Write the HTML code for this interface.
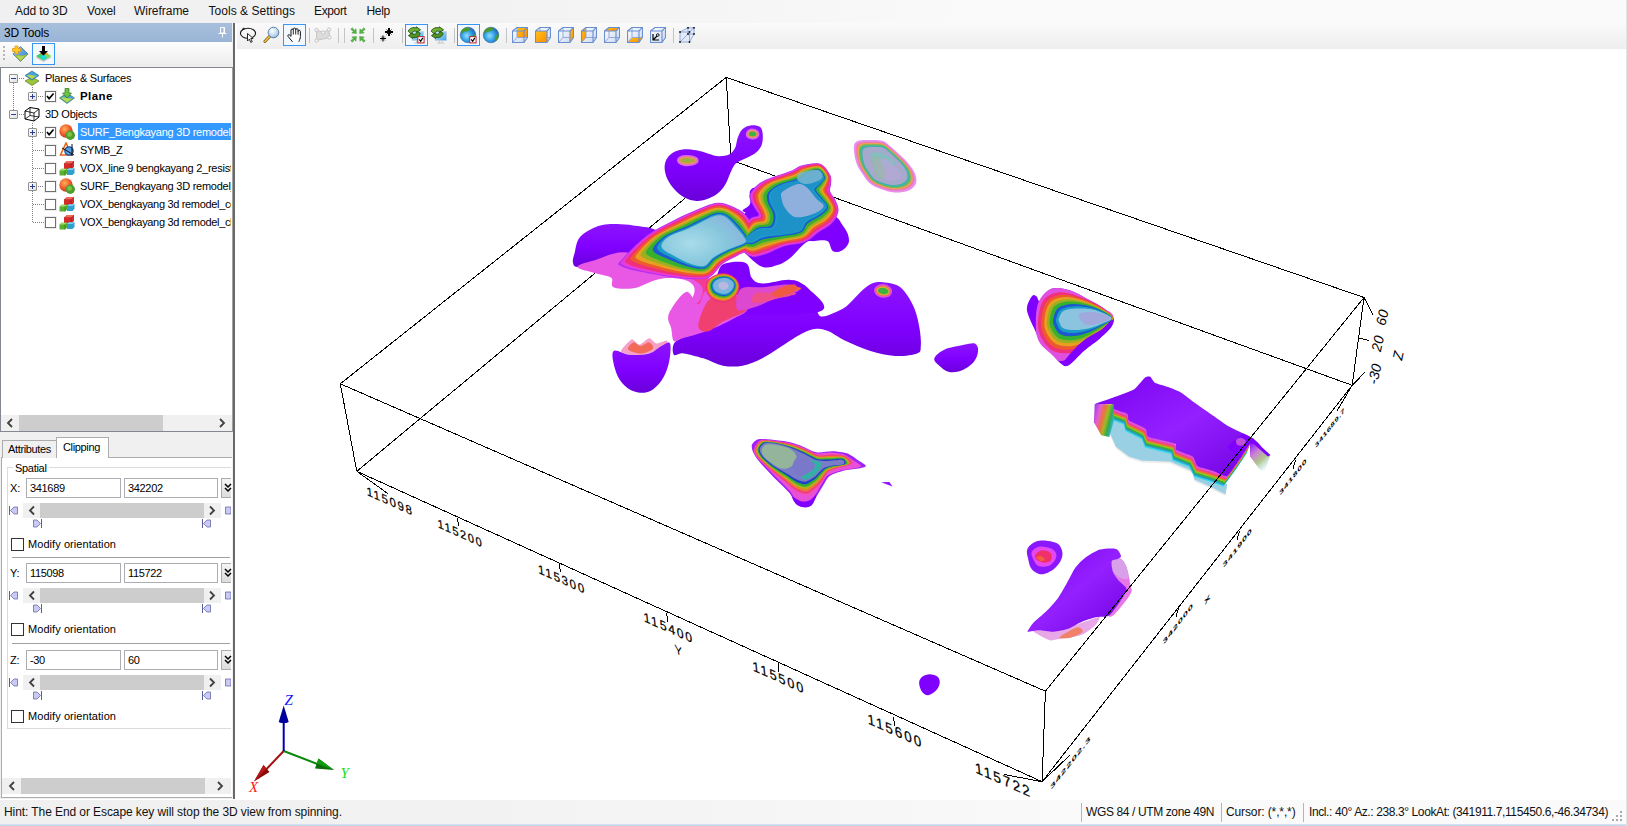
<!DOCTYPE html>
<html><head><meta charset="utf-8"><title>3D Viewer</title>
<style>
*{box-sizing:border-box;margin:0;padding:0}
html,body{width:1627px;height:826px;overflow:hidden;background:#fff;font-family:"Liberation Sans",sans-serif;font-size:12px;color:#000}
.a{position:absolute;white-space:nowrap}
#menubar{left:0;top:0;width:1627px;height:23px;background:linear-gradient(90deg,#f0f0f0 0,#f2f2f2 500px,#fafafa 1000px)}
#menubar span{position:absolute;top:3px;font-size:12px;line-height:16px;color:#111}
#lp{left:0;top:23px;width:235px;height:776px;background:#f0f0f0}
#lphead{left:0;top:23px;width:232px;height:19px;background:linear-gradient(#a7bfdc,#9ab5d6)}
#lptb{left:0;top:42px;width:232px;height:25px;background:linear-gradient(#fdfdfd,#ececec)}
#tree{left:0;top:67px;width:233px;height:365px;background:#fff;border:1px solid #828790;border-right-color:#a0a0a0}
#vsplit{left:233px;top:23px;width:2px;height:776px;background:#696969}
#tb{left:237px;top:23px;width:1390px;height:27.5px;background:linear-gradient(#fafafa,#ededed)}
#view{left:236px;top:49px;width:1391px;height:750px;background:#fff}
#status{left:0;top:799.5px;width:1627px;height:24.5px;background:linear-gradient(90deg,#f0f0f0 0,#f2f2f2 500px,#fafafa 1100px)}
#botline{left:0;top:824px;width:1627px;height:2px;background:linear-gradient(#dfe7f1,#bccfe6)}
#redge{left:1625.5px;top:0;width:1.5px;height:826px;background:#e3e3e3}
.trow{position:absolute;left:0;height:18px;line-height:18px;font-size:12px;white-space:nowrap}
.st{position:absolute;top:4px;font-size:12px;line-height:16px;color:#111}

.t11{font-size:11px;letter-spacing:-0.25px}
.xb{position:absolute;width:9px;height:9px;border:1px solid #919191;background:linear-gradient(135deg,#fff,#e0e0e0);border-radius:1px}
.xb i{position:absolute;left:1px;top:3px;width:5px;height:1px;background:#2b3f8f}
.xb b{position:absolute;left:3px;top:1px;width:1px;height:5px;background:#2b3f8f}
.cb{position:absolute;width:11px;height:11px;border:1px solid #707070;background:#fff;box-shadow:0 0 0 1px #ececec}
.dh{position:absolute;height:1px;background-image:linear-gradient(90deg,#808080 1px,transparent 1px);background-size:2px 1px}
.dv{position:absolute;width:1px;background-image:linear-gradient(#808080 1px,transparent 1px);background-size:1px 2px}
.tx{position:absolute;font-size:11px;letter-spacing:-0.25px;line-height:18px;height:18px;white-space:pre}
.ic{position:absolute;width:16px;height:16px}
.sb{position:absolute;background:#f0f0f0}
.sb .th{position:absolute;top:0;bottom:0;background:#cdcdcd}
.sb svg{position:absolute;top:0}
.inp{position:absolute;height:20px;border:1px solid #abadb3;background:#fff;font-size:11px;letter-spacing:-0.33px;line-height:18px;padding-left:3px}
.sep{position:absolute;left:12px;width:218px;height:2px;border-top:1px solid #a0a0a0;border-bottom:1px solid #fff}
</style></head><body>
<div id="menubar" class="a">
<span style="left:15px;letter-spacing:-0.1px">Add to 3D</span><span style="left:87px;letter-spacing:-0.17px">Voxel</span><span style="left:134px;letter-spacing:-0.04px">Wireframe</span><span style="left:208.5px;letter-spacing:0.03px">Tools &amp; Settings</span><span style="left:314px;letter-spacing:-0.36px">Export</span><span style="left:366.5px;letter-spacing:-0.3px">Help</span>
</div>
<div id="lp" class="a"></div>
<div id="lphead" class="a"><span class="a" style="left:4px;top:2px;font-size:12px;letter-spacing:-0.19px;line-height:16px">3D Tools</span></div>
<div id="lptb" class="a"></div>
<div id="tree" class="a"></div>
<div id="treecontent"><div class="dv" style="left:13px;top:83px;height:27px"></div>
<div class="dh" style="left:19px;top:78px;width:5px"></div>
<div class="dh" style="left:19px;top:114px;width:5px"></div>
<div class="dv" style="left:32px;top:87px;height:5px"></div>
<div class="dh" style="left:38px;top:96px;width:6px"></div>
<div class="dv" style="left:32px;top:123px;height:100px"></div>
<div class="dh" style="left:38px;top:132px;width:6px"></div>
<div class="dh" style="left:38px;top:186px;width:6px"></div>
<div class="dh" style="left:33px;top:150px;width:11px"></div>
<div class="dh" style="left:33px;top:168px;width:11px"></div>
<div class="dh" style="left:33px;top:204px;width:11px"></div>
<div class="dh" style="left:33px;top:222px;width:11px"></div>
<div class="xb" style="left:9px;top:74px"><i></i></div>
<div class="xb" style="left:9px;top:110px"><i></i></div>
<div class="xb" style="left:28px;top:92px"><i></i><b></b></div>
<div class="xb" style="left:28px;top:128px"><i></i><b></b></div>
<div class="xb" style="left:28px;top:182px"><i></i><b></b></div>
<div class="cb" style="left:45px;top:91px"><svg width="9" height="9" viewBox="1 1 9.5 9.5" style="position:absolute;left:0;top:0"><path d="M2 5.2 L4.3 8 L9 2.6" fill="none" stroke="#000" stroke-width="1.7"/></svg></div>
<div class="cb" style="left:45px;top:127px"><svg width="9" height="9" viewBox="1 1 9.5 9.5" style="position:absolute;left:0;top:0"><path d="M2 5.2 L4.3 8 L9 2.6" fill="none" stroke="#000" stroke-width="1.7"/></svg></div>
<div class="cb" style="left:45px;top:145px"></div>
<div class="cb" style="left:45px;top:163px"></div>
<div class="cb" style="left:45px;top:181px"></div>
<div class="cb" style="left:45px;top:199px"></div>
<div class="cb" style="left:45px;top:217px"></div>
<div class="a" style="left:78px;top:123px;width:153px;height:17px;background:#3399ff"></div>
<div class="tx" style="left:45px;top:69px;">Planes &amp; Surfaces</div>
<div class="tx" style="left:80px;top:87px;font-weight:bold;letter-spacing:0.4px;font-size:11.5px">Plane</div>
<div class="tx" style="left:45px;top:105px;">3D Objects</div>
<div class="tx" style="left:80px;top:123px;width:151px;overflow:hidden;color:#fff">SURF_Bengkayang 3D remodel_resistivity</div>
<div class="tx" style="left:80px;top:141px;">SYMB_Z</div>
<div class="tx" style="left:80px;top:159px;width:151px;overflow:hidden;">VOX_line 9 bengkayang 2_resistivity</div>
<div class="tx" style="left:80px;top:177px;width:151px;overflow:hidden;">SURF_Bengkayang 3D remodel_conductivity</div>
<div class="tx" style="left:80px;top:195px;width:151px;overflow:hidden;letter-spacing:-0.33px">VOX_bengkayang 3d remodel_conductivity</div>
<div class="tx" style="left:80px;top:213px;width:151px;overflow:hidden;letter-spacing:-0.33px">VOX_bengkayang 3d remodel_chargeability</div>
<svg class="ic" style="left:24px;top:70px" viewBox="0 0 16 16"><path d="M8 7 L15 11 L8 15.5 L1 11Z" fill="#9cc43c" stroke="#4d6b1a" stroke-width=".6"/><path d="M8 1 L15 5.5 L8 10 L1 5.5Z" fill="#4aa3d8" stroke="#1d5f8a" stroke-width=".6"/><path d="M3 5.5 C6 3.5 9 7 13 5.2 L8 9 Z" fill="#b8d94a"/></svg>
<svg class="ic" style="left:59px;top:88px" viewBox="0 0 16 16"><path d="M8 5 L15.5 10 L8 15.5 L.5 10Z" fill="#4aa3d8" stroke="#2a6b2a" stroke-width=".6"/><path d="M2 10 C5 7.5 9 12 14 10 L8 14.5Z" fill="#b8d94a"/><path d="M6 .5 H10 V5 H12.5 L8 10 L3.5 5 H6Z" fill="#6fc043" stroke="#2f7a1d" stroke-width=".7"/></svg>
<svg class="ic" style="left:24px;top:106px" viewBox="0 0 16 16"><path d="M1 5 L6 1.5 L15 3 L15 11 L10 15 L1 13Z" fill="#fff" stroke="#000" stroke-width="1"/><path d="M1 5 L10 7 L15 3 M10 7 L10 15 M6 1.5 L6 9.5 L1 13 M6 9.5 L15 11" fill="none" stroke="#000" stroke-width=".8"/></svg>
<svg class="ic" style="left:59px;top:124px" viewBox="0 0 16 16"><defs><radialGradient id="sg132" cx=".4" cy=".35" r=".7"><stop offset="0" stop-color="#ffb05a"/><stop offset=".6" stop-color="#f0562a"/><stop offset="1" stop-color="#c9301a"/></radialGradient></defs><circle cx="7" cy="7" r="6.7" fill="url(#sg132)"/><circle cx="11.3" cy="11.3" r="4.7" fill="#4f9e2c"/><circle cx="10.6" cy="10.4" r="2.4" fill="#8fd05a" opacity=".7"/></svg>
<svg class="ic" style="left:59px;top:142px" viewBox="0 0 16 16"><path d="M7 1 L1.5 13 H12.5Z" fill="none" stroke="#e8641a" stroke-width="1.6"/><circle cx="10" cy="9" r="4.2" fill="#5aa0e0" stroke="#1d4f9a" stroke-width="1.2"/><path d="M13 2 L13 14 M3 6 L15 13" stroke="#111" stroke-width="1"/></svg>
<svg class="ic" style="left:59px;top:160px" viewBox="0 0 16 16"><path d="M5 3.5 L8 1 L15 1 L15 7 L12 9.5 L5 9.5Z" fill="#d42a2a"/><path d="M5 3.5 L12 3.5 L15 1 M12 3.5 L12 9.5" stroke="#8a1010" stroke-width=".6" fill="none"/><path d="M5 3.5 L8 1 L15 1 L12 3.5Z" fill="#f06a5a"/><path d="M8 10 L10 8.2 L15.5 8.2 L15.5 13 L13.5 15 L8 15Z" fill="#2f9fd0"/><path d="M8 10 L10 8.2 L15.5 8.2 L13.5 10Z" fill="#7fd0f0"/><path d="M.5 10.5 L2.5 8.7 L8 8.7 L8 13.5 L6 15.5 L.5 15.5Z" fill="#58b030"/><path d="M.5 10.5 L2.5 8.7 L8 8.7 L6 10.5Z" fill="#a0e070"/><path d="M6 10.5 L6 15.5" stroke="#2d7010" stroke-width=".6"/></svg>
<svg class="ic" style="left:59px;top:178px" viewBox="0 0 16 16"><defs><radialGradient id="sg186" cx=".4" cy=".35" r=".7"><stop offset="0" stop-color="#ffb05a"/><stop offset=".6" stop-color="#f0562a"/><stop offset="1" stop-color="#c9301a"/></radialGradient></defs><circle cx="7" cy="7" r="6.7" fill="url(#sg186)"/><circle cx="11.3" cy="11.3" r="4.7" fill="#4f9e2c"/><circle cx="10.6" cy="10.4" r="2.4" fill="#8fd05a" opacity=".7"/></svg>
<svg class="ic" style="left:59px;top:196px" viewBox="0 0 16 16"><path d="M5 3.5 L8 1 L15 1 L15 7 L12 9.5 L5 9.5Z" fill="#d42a2a"/><path d="M5 3.5 L12 3.5 L15 1 M12 3.5 L12 9.5" stroke="#8a1010" stroke-width=".6" fill="none"/><path d="M5 3.5 L8 1 L15 1 L12 3.5Z" fill="#f06a5a"/><path d="M8 10 L10 8.2 L15.5 8.2 L15.5 13 L13.5 15 L8 15Z" fill="#2f9fd0"/><path d="M8 10 L10 8.2 L15.5 8.2 L13.5 10Z" fill="#7fd0f0"/><path d="M.5 10.5 L2.5 8.7 L8 8.7 L8 13.5 L6 15.5 L.5 15.5Z" fill="#58b030"/><path d="M.5 10.5 L2.5 8.7 L8 8.7 L6 10.5Z" fill="#a0e070"/><path d="M6 10.5 L6 15.5" stroke="#2d7010" stroke-width=".6"/></svg>
<svg class="ic" style="left:59px;top:214px" viewBox="0 0 16 16"><path d="M5 3.5 L8 1 L15 1 L15 7 L12 9.5 L5 9.5Z" fill="#d42a2a"/><path d="M5 3.5 L12 3.5 L15 1 M12 3.5 L12 9.5" stroke="#8a1010" stroke-width=".6" fill="none"/><path d="M5 3.5 L8 1 L15 1 L12 3.5Z" fill="#f06a5a"/><path d="M8 10 L10 8.2 L15.5 8.2 L15.5 13 L13.5 15 L8 15Z" fill="#2f9fd0"/><path d="M8 10 L10 8.2 L15.5 8.2 L13.5 10Z" fill="#7fd0f0"/><path d="M.5 10.5 L2.5 8.7 L8 8.7 L8 13.5 L6 15.5 L.5 15.5Z" fill="#58b030"/><path d="M.5 10.5 L2.5 8.7 L8 8.7 L6 10.5Z" fill="#a0e070"/><path d="M6 10.5 L6 15.5" stroke="#2d7010" stroke-width=".6"/></svg>
<div class="sb" style="left:1px;top:415px;width:231px;height:16px"><div class="th" style="left:18px;width:144px"></div><svg width="231" height="16"><path d="M11 4 L7 8 L11 12" fill="none" stroke="#404040" stroke-width="1.8"/><path d="M219 4 L223 8 L219 12" fill="none" stroke="#404040" stroke-width="1.8"/></svg></div></div>
<div id="clip"><div class="a" style="left:1px;top:457px;width:231px;height:341px;border:1px solid #acacac;border-right:none;background:#fff"></div>
<div class="a" style="left:2px;top:440px;width:55px;height:18px;border:1px solid #acacac;border-bottom:none;background:#f0f0f0"></div>
<div class="a" style="left:56px;top:437px;width:53px;height:21px;border:1px solid #acacac;border-bottom:none;background:#fff"></div>
<div class="tx" style="left:8px;top:440px;letter-spacing:-0.35px">Attributes</div>
<div class="tx" style="left:63px;top:438px;letter-spacing:-0.35px">Clipping</div>
<div class="a" style="left:7px;top:467px;width:224px;height:262px;border:1px solid #dcdcdc;border-right:none"></div>
<div class="tx" style="left:13px;top:459px;background:#fff;padding:0 2px;letter-spacing:-0.3px">Spatial</div>
<div class="tx" style="left:10px;top:479px;letter-spacing:-0.2px">X:</div>
<div class="inp" style="left:26px;top:478px;width:95px">341689</div>
<div class="inp" style="left:124px;top:478px;width:94px">342202</div>
<div class="a" style="left:221px;top:478px;width:10px;height:20px;border:1px solid #acacac;border-right:none;background:linear-gradient(#f4f4f4,#dcdcdc)"><svg width="9" height="18" style="position:absolute;left:2px;top:0"><path d="M1 5 L4 8 L7 5 M1 9 L4 12 L7 9" fill="none" stroke="#000" stroke-width="1.5"/></svg></div>
<div class="sb" style="left:23px;top:503px;width:198px;height:15px"><div class="th" style="left:17px;width:164px"></div><svg width="198" height="15"><path d="M11 3.5 L7 7.5 L11 11.5" fill="none" stroke="#404040" stroke-width="1.8"/><path d="M187 3.5 L191 7.5 L187 11.5" fill="none" stroke="#404040" stroke-width="1.8"/></svg></div>
<svg class="a" style="left:9px;top:506px" width="10" height="10"><path d="M.5 0 V9" stroke="#5b5b9a" fill="none"/><path d="M1.5 4.5 L5 1 H8.5 V8 H5Z" fill="#c9c9f5" stroke="#6a6aa8" stroke-width=".8"/></svg>
<svg class="a" style="left:225px;top:506px" width="6" height="10"><path d="M.5 1 H6 V8 H.5Z" fill="#c9c9f5" stroke="#6a6aa8" stroke-width=".8"/></svg>
<svg class="a" style="left:33px;top:519px" width="10" height="10"><path d="M8.5 0 V9" stroke="#5b5b9a" fill="none"/><path d="M7.5 4.5 L4 1 H.5 V8 H4Z" fill="#c9c9f5" stroke="#6a6aa8" stroke-width=".8"/></svg>
<svg class="a" style="left:202px;top:519px" width="10" height="10"><path d="M.5 0 V9" stroke="#5b5b9a" fill="none"/><path d="M1.5 4.5 L5 1 H8.5 V8 H5Z" fill="#c9c9f5" stroke="#6a6aa8" stroke-width=".8"/></svg>
<div class="cb" style="left:11px;top:538px;width:13px;height:13px;border-color:#333;box-shadow:none"></div>
<div class="tx" style="left:28px;top:535px;letter-spacing:0.065px">Modify orientation</div>
<div class="sep" style="top:557px"></div>
<div class="tx" style="left:10px;top:564px;letter-spacing:-0.2px">Y:</div>
<div class="inp" style="left:26px;top:563px;width:95px">115098</div>
<div class="inp" style="left:124px;top:563px;width:94px">115722</div>
<div class="a" style="left:221px;top:563px;width:10px;height:20px;border:1px solid #acacac;border-right:none;background:linear-gradient(#f4f4f4,#dcdcdc)"><svg width="9" height="18" style="position:absolute;left:2px;top:0"><path d="M1 5 L4 8 L7 5 M1 9 L4 12 L7 9" fill="none" stroke="#000" stroke-width="1.5"/></svg></div>
<div class="sb" style="left:23px;top:588px;width:198px;height:15px"><div class="th" style="left:17px;width:164px"></div><svg width="198" height="15"><path d="M11 3.5 L7 7.5 L11 11.5" fill="none" stroke="#404040" stroke-width="1.8"/><path d="M187 3.5 L191 7.5 L187 11.5" fill="none" stroke="#404040" stroke-width="1.8"/></svg></div>
<svg class="a" style="left:9px;top:591px" width="10" height="10"><path d="M.5 0 V9" stroke="#5b5b9a" fill="none"/><path d="M1.5 4.5 L5 1 H8.5 V8 H5Z" fill="#c9c9f5" stroke="#6a6aa8" stroke-width=".8"/></svg>
<svg class="a" style="left:225px;top:591px" width="6" height="10"><path d="M.5 1 H6 V8 H.5Z" fill="#c9c9f5" stroke="#6a6aa8" stroke-width=".8"/></svg>
<svg class="a" style="left:33px;top:604px" width="10" height="10"><path d="M8.5 0 V9" stroke="#5b5b9a" fill="none"/><path d="M7.5 4.5 L4 1 H.5 V8 H4Z" fill="#c9c9f5" stroke="#6a6aa8" stroke-width=".8"/></svg>
<svg class="a" style="left:202px;top:604px" width="10" height="10"><path d="M.5 0 V9" stroke="#5b5b9a" fill="none"/><path d="M1.5 4.5 L5 1 H8.5 V8 H5Z" fill="#c9c9f5" stroke="#6a6aa8" stroke-width=".8"/></svg>
<div class="cb" style="left:11px;top:623px;width:13px;height:13px;border-color:#333;box-shadow:none"></div>
<div class="tx" style="left:28px;top:620px;letter-spacing:0.065px">Modify orientation</div>
<div class="sep" style="top:643px"></div>
<div class="tx" style="left:10px;top:651px;letter-spacing:-0.2px">Z:</div>
<div class="inp" style="left:26px;top:650px;width:95px">-30</div>
<div class="inp" style="left:124px;top:650px;width:94px">60</div>
<div class="a" style="left:221px;top:650px;width:10px;height:20px;border:1px solid #acacac;border-right:none;background:linear-gradient(#f4f4f4,#dcdcdc)"><svg width="9" height="18" style="position:absolute;left:2px;top:0"><path d="M1 5 L4 8 L7 5 M1 9 L4 12 L7 9" fill="none" stroke="#000" stroke-width="1.5"/></svg></div>
<div class="sb" style="left:23px;top:675px;width:198px;height:15px"><div class="th" style="left:17px;width:164px"></div><svg width="198" height="15"><path d="M11 3.5 L7 7.5 L11 11.5" fill="none" stroke="#404040" stroke-width="1.8"/><path d="M187 3.5 L191 7.5 L187 11.5" fill="none" stroke="#404040" stroke-width="1.8"/></svg></div>
<svg class="a" style="left:9px;top:678px" width="10" height="10"><path d="M.5 0 V9" stroke="#5b5b9a" fill="none"/><path d="M1.5 4.5 L5 1 H8.5 V8 H5Z" fill="#c9c9f5" stroke="#6a6aa8" stroke-width=".8"/></svg>
<svg class="a" style="left:225px;top:678px" width="6" height="10"><path d="M.5 1 H6 V8 H.5Z" fill="#c9c9f5" stroke="#6a6aa8" stroke-width=".8"/></svg>
<svg class="a" style="left:33px;top:691px" width="10" height="10"><path d="M8.5 0 V9" stroke="#5b5b9a" fill="none"/><path d="M7.5 4.5 L4 1 H.5 V8 H4Z" fill="#c9c9f5" stroke="#6a6aa8" stroke-width=".8"/></svg>
<svg class="a" style="left:202px;top:691px" width="10" height="10"><path d="M.5 0 V9" stroke="#5b5b9a" fill="none"/><path d="M1.5 4.5 L5 1 H8.5 V8 H5Z" fill="#c9c9f5" stroke="#6a6aa8" stroke-width=".8"/></svg>
<div class="cb" style="left:11px;top:710px;width:13px;height:13px;border-color:#333;box-shadow:none"></div>
<div class="tx" style="left:28px;top:707px;letter-spacing:0.065px">Modify orientation</div>
<div class="sb" style="left:2px;top:778px;width:229px;height:16px"><div class="th" style="left:19px;width:184px"></div><svg width="229" height="16"><path d="M12 4 L8 8 L12 12" fill="none" stroke="#404040" stroke-width="1.8"/><path d="M216 4 L220 8 L216 12" fill="none" stroke="#404040" stroke-width="1.8"/></svg></div></div>
<div id="vsplit" class="a"></div>
<div id="tb" class="a"></div>
<div id="view" class="a"></div>
<!--VIEW-START--><svg class="a" style="left:236px;top:50px" width="1391" height="749" viewBox="236 50 1391 749">
<defs><linearGradient id="pv" x1="0" y1="0" x2="0" y2="1"><stop offset="0" stop-color="#8d14ff"/><stop offset=".55" stop-color="#8000ff"/><stop offset="1" stop-color="#6a00da"/></linearGradient><linearGradient id="pv2" x1="0" y1="0" x2="1" y2="1"><stop offset="0" stop-color="#7a00f2"/><stop offset=".5" stop-color="#9420ff"/><stop offset="1" stop-color="#7000e0"/></linearGradient><radialGradient id="teal1" cx=".35" cy=".55" r=".7"><stop offset="0" stop-color="#a8dcea"/><stop offset=".6" stop-color="#86c6dc"/><stop offset="1" stop-color="#8cb2e0"/></radialGradient><filter id="b1"><feGaussianBlur stdDeviation="1"/></filter><filter id="b2"><feGaussianBlur stdDeviation="2.2"/></filter><filter id="b4"><feGaussianBlur stdDeviation="4"/></filter><linearGradient id="lf7" x1="0" y1="0" x2="1" y2="0.4"><stop offset="0" stop-color="#9a30f0"/><stop offset=".3" stop-color="#e060d0"/><stop offset=".5" stop-color="#f07040"/><stop offset=".68" stop-color="#a0b828"/><stop offset=".85" stop-color="#30a850"/><stop offset="1" stop-color="#30b8d0"/></linearGradient><linearGradient id="rf7" x1="0" y1="0" x2="0.6" y2="1"><stop offset="0" stop-color="#8000ff"/><stop offset=".4" stop-color="#c060d0" stop-opacity=".8"/><stop offset=".7" stop-color="#80a040" stop-opacity=".6"/><stop offset="1" stop-color="#60c0c0" stop-opacity=".1"/></linearGradient></defs>
<g id="backedges" fill="none" stroke="#000" stroke-width="1" shape-rendering="crispEdges"><path d="M726.2 77.4 L731 160"/><path d="M731 160 L356.8 471.3"/><path d="M731 160 L1352.2 385.3"/></g>
<g id="blobs"><path d="M664.6 168.3 C664.5 165.2 665.1 162.3 666.3 159.7 C667.6 157.2 669.6 154.6 672.4 152.9 C675.1 151.1 678.7 149.8 682.7 149.4 C686.7 149.0 692.2 149.6 696.5 150.3 C700.8 151.0 704.8 152.7 708.5 153.7 C712.2 154.7 715.4 156.2 718.8 156.3 C722.3 156.4 726.4 156.0 729.2 154.6 C731.9 153.1 733.7 150.6 735.2 147.7 C736.6 144.8 736.5 140.5 737.8 137.4 C739.1 134.2 740.6 130.8 742.9 128.8 C745.2 126.8 748.7 125.6 751.5 125.3 C754.4 125.0 758.3 125.6 760.1 127.0 C762.0 128.5 762.4 131.1 762.7 133.9 C763.0 136.8 762.9 141.2 761.9 144.3 C760.9 147.3 759.3 149.7 756.7 152.0 C754.1 154.3 749.8 156.2 746.4 158.0 C742.9 159.9 738.6 160.9 736.0 163.2 C733.5 165.5 732.6 168.3 730.9 171.8 C729.2 175.2 727.7 180.4 725.7 183.8 C723.7 187.3 721.7 190.0 718.8 192.4 C716.0 194.9 712.2 197.0 708.5 198.5 C704.8 199.9 700.5 201.2 696.5 201.0 C692.4 200.9 688.1 199.6 684.4 197.6 C680.7 195.6 677.0 192.2 674.1 189.0 C671.2 185.8 668.8 182.1 667.2 178.7 C665.6 175.2 664.8 171.5 664.6 168.3Z" fill="url(#pv)" />
<path d="M680.5 160.5 C680.3 159.9 682.1 159.0 683.6 158.7 C685.2 158.4 687.9 158.5 689.8 158.7 C691.7 159.0 694.6 159.7 695.0 160.2 C695.3 160.8 693.6 161.6 691.9 162.0 C690.2 162.4 686.5 162.9 684.6 162.6 C682.8 162.4 680.7 161.2 680.5 160.5Z" fill="#d868e8" stroke="#d868e8" stroke-width="7.0" stroke-linejoin="round"/>
<path d="M680.5 160.5 C680.3 159.9 682.1 159.0 683.6 158.7 C685.2 158.4 687.9 158.5 689.8 158.7 C691.7 159.0 694.6 159.7 695.0 160.2 C695.3 160.8 693.6 161.6 691.9 162.0 C690.2 162.4 686.5 162.9 684.6 162.6 C682.8 162.4 680.7 161.2 680.5 160.5Z" fill="#f078a0" stroke="#f078a0" stroke-width="4.5" stroke-linejoin="round"/>
<path d="M680.5 160.5 C680.3 159.9 682.1 159.0 683.6 158.7 C685.2 158.4 687.9 158.5 689.8 158.7 C691.7 159.0 694.6 159.7 695.0 160.2 C695.3 160.8 693.6 161.6 691.9 162.0 C690.2 162.4 686.5 162.9 684.6 162.6 C682.8 162.4 680.7 161.2 680.5 160.5Z" fill="#e8a040" stroke="#e8a040" stroke-width="2.4" stroke-linejoin="round"/>
<path d="M680.5 160.5 C680.3 159.9 682.1 159.0 683.6 158.7 C685.2 158.4 687.9 158.5 689.8 158.7 C691.7 159.0 694.6 159.7 695.0 160.2 C695.3 160.8 693.6 161.6 691.9 162.0 C690.2 162.4 686.5 162.9 684.6 162.6 C682.8 162.4 680.7 161.2 680.5 160.5Z" fill="#a0b040" stroke="#a0b040" stroke-width="0.7" stroke-linejoin="round"/>
<path d="M749.3 134.0 C749.4 133.5 750.0 132.5 750.8 132.2 C751.7 132.0 753.5 132.2 754.3 132.5 C755.2 132.9 756.0 133.8 755.9 134.3 C755.7 134.9 754.5 135.6 753.6 135.8 C752.7 136.0 751.2 135.8 750.5 135.5 C749.7 135.2 749.2 134.6 749.3 134.0Z" fill="#d868e8" stroke="#d868e8" stroke-width="7.0" stroke-linejoin="round"/>
<path d="M749.3 134.0 C749.4 133.5 750.0 132.5 750.8 132.2 C751.7 132.0 753.5 132.2 754.3 132.5 C755.2 132.9 756.0 133.8 755.9 134.3 C755.7 134.9 754.5 135.6 753.6 135.8 C752.7 136.0 751.2 135.8 750.5 135.5 C749.7 135.2 749.2 134.6 749.3 134.0Z" fill="#f078a0" stroke="#f078a0" stroke-width="4.5" stroke-linejoin="round"/>
<path d="M749.3 134.0 C749.4 133.5 750.0 132.5 750.8 132.2 C751.7 132.0 753.5 132.2 754.3 132.5 C755.2 132.9 756.0 133.8 755.9 134.3 C755.7 134.9 754.5 135.6 753.6 135.8 C752.7 136.0 751.2 135.8 750.5 135.5 C749.7 135.2 749.2 134.6 749.3 134.0Z" fill="#e8a040" stroke="#e8a040" stroke-width="2.8" stroke-linejoin="round"/>
<path d="M749.3 134.0 C749.4 133.5 750.0 132.5 750.8 132.2 C751.7 132.0 753.5 132.2 754.3 132.5 C755.2 132.9 756.0 133.8 755.9 134.3 C755.7 134.9 754.5 135.6 753.6 135.8 C752.7 136.0 751.2 135.8 750.5 135.5 C749.7 135.2 749.2 134.6 749.3 134.0Z" fill="#40b040" stroke="#40b040" stroke-width="1.1" stroke-linejoin="round"/>
<path d="M853.9 146.8 C854.2 143.1 855.5 142.0 858.2 140.8 C861.0 139.7 866.3 140.0 870.3 140.0 C874.3 140.0 878.9 139.7 882.3 140.8 C885.8 142.0 888.1 144.5 890.9 146.8 C893.8 149.1 896.7 151.9 899.5 154.6 C902.4 157.3 905.5 160.0 908.1 163.2 C910.7 166.3 913.7 170.1 915.0 173.5 C916.3 177.0 917.0 181.0 915.9 183.8 C914.7 186.7 911.7 189.3 908.1 190.7 C904.5 192.2 899.0 192.7 894.4 192.4 C889.8 192.2 884.6 190.4 880.6 189.0 C876.6 187.6 873.1 186.1 870.3 183.8 C867.4 181.5 865.7 178.7 863.4 175.2 C861.1 171.8 858.1 167.9 856.5 163.2 C854.9 158.5 853.6 150.6 853.9 146.8Z" fill="#e070e8" opacity=".8"/>
<path d="M856.1 148.2 C856.3 144.7 857.5 143.6 860.1 142.6 C862.6 141.5 867.5 141.8 871.3 141.8 C875.0 141.8 879.3 141.5 882.5 142.6 C885.7 143.6 887.8 146.0 890.5 148.2 C893.1 150.3 895.8 152.8 898.5 155.4 C901.1 157.9 904.1 160.4 906.5 163.4 C908.9 166.3 911.7 169.8 912.9 173.0 C914.1 176.2 914.7 179.9 913.7 182.6 C912.6 185.2 909.8 187.6 906.5 189.0 C903.1 190.3 897.9 190.8 893.7 190.6 C889.4 190.3 884.6 188.7 880.9 187.4 C877.1 186.0 873.9 184.7 871.3 182.6 C868.6 180.4 867.0 177.8 864.9 174.6 C862.7 171.4 859.9 167.8 858.5 163.4 C857.0 159.0 855.8 151.6 856.1 148.2Z" fill="#f078b0" />
<path d="M857.5 149.0 C857.8 145.8 858.9 144.7 861.3 143.7 C863.7 142.7 868.4 143.0 871.9 143.0 C875.5 143.0 879.5 142.7 882.6 143.7 C885.6 144.7 887.6 147.0 890.2 149.0 C892.7 151.1 895.2 153.5 897.8 155.9 C900.3 158.3 903.1 160.7 905.4 163.5 C907.6 166.3 910.3 169.5 911.4 172.6 C912.6 175.6 913.2 179.2 912.2 181.7 C911.2 184.2 908.5 186.5 905.4 187.8 C902.2 189.0 897.3 189.5 893.2 189.3 C889.2 189.0 884.6 187.5 881.1 186.3 C877.5 185.0 874.5 183.7 871.9 181.7 C869.4 179.7 867.9 177.1 865.9 174.1 C863.8 171.1 861.2 167.7 859.8 163.5 C858.4 159.3 857.3 152.3 857.5 149.0Z" fill="#eaa050" />
<path d="M859.0 149.9 C859.2 146.8 860.3 145.9 862.6 144.9 C864.8 144.0 869.3 144.2 872.6 144.2 C876.0 144.2 879.8 144.0 882.7 144.9 C885.6 145.9 887.5 148.0 889.9 149.9 C892.3 151.9 894.7 154.1 897.0 156.4 C899.4 158.7 902.1 161.0 904.2 163.6 C906.4 166.2 908.9 169.3 910.0 172.2 C911.1 175.1 911.7 178.4 910.7 180.8 C909.7 183.2 907.2 185.4 904.2 186.6 C901.2 187.8 896.6 188.3 892.7 188.0 C888.9 187.8 884.6 186.3 881.2 185.1 C877.9 183.9 875.0 182.8 872.6 180.8 C870.2 178.9 868.8 176.5 866.9 173.6 C865.0 170.8 862.4 167.5 861.1 163.6 C859.8 159.6 858.7 153.1 859.0 149.9Z" fill="#70b858" />
<path d="M860.4 150.8 C860.6 147.9 861.7 147.0 863.8 146.1 C866.0 145.2 870.1 145.4 873.3 145.4 C876.5 145.4 880.1 145.2 882.8 146.1 C885.5 147.0 887.3 149.0 889.6 150.8 C891.8 152.6 894.1 154.8 896.3 156.9 C898.6 159.1 901.1 161.2 903.1 163.7 C905.1 166.2 907.5 169.1 908.5 171.8 C909.5 174.6 910.1 177.7 909.2 180.0 C908.3 182.2 905.9 184.3 903.1 185.4 C900.3 186.5 895.9 187.0 892.3 186.7 C888.7 186.5 884.6 185.2 881.4 184.0 C878.3 182.9 875.6 181.8 873.3 180.0 C871.0 178.2 869.7 175.9 867.9 173.2 C866.1 170.5 863.7 167.4 862.5 163.7 C861.2 160.0 860.2 153.8 860.4 150.8Z" fill="#40b4ac" />
<path d="M862.5 152.1 C862.7 149.4 863.6 148.6 865.6 147.8 C867.5 146.9 871.4 147.1 874.3 147.1 C877.1 147.1 880.5 146.9 882.9 147.8 C885.4 148.6 887.1 150.5 889.1 152.1 C891.2 153.8 893.3 155.7 895.3 157.7 C897.4 159.6 899.7 161.6 901.5 163.9 C903.4 166.1 905.5 168.8 906.5 171.3 C907.4 173.8 907.9 176.7 907.1 178.7 C906.3 180.8 904.1 182.7 901.5 183.7 C898.9 184.7 894.9 185.1 891.6 184.9 C888.3 184.7 884.6 183.5 881.7 182.5 C878.8 181.4 876.3 180.4 874.3 178.7 C872.2 177.1 871.0 175.0 869.3 172.5 C867.6 170.1 865.5 167.3 864.3 163.9 C863.2 160.5 862.3 154.8 862.5 152.1Z" fill="#a6a8cc" />
<path d="M870.3 154.4 C870.4 153.3 870.9 153.0 872.0 152.7 C873.1 152.4 875.2 152.5 876.8 152.5 C878.4 152.5 880.2 152.4 881.6 152.7 C883.0 153.0 883.9 153.7 885.1 154.4 C886.2 155.0 887.4 155.8 888.5 156.6 C889.7 157.3 890.9 158.1 892.0 159.0 C893.0 159.8 894.2 160.9 894.7 161.9 C895.2 162.8 895.5 163.9 895.0 164.7 C894.6 165.5 893.4 166.3 892.0 166.7 C890.5 167.1 888.3 167.2 886.4 167.2 C884.6 167.1 882.5 166.6 880.9 166.2 C879.3 165.8 878.0 165.4 876.8 164.7 C875.7 164.1 875.0 163.3 874.1 162.3 C873.1 161.4 871.9 160.3 871.3 159.0 C870.7 157.6 870.2 155.4 870.3 154.4Z" fill="#7cc4bc" opacity=".75"/>
<path d="M874.7 161.7 C874.8 160.2 875.3 159.7 876.5 159.2 C877.6 158.7 879.8 158.9 881.5 158.9 C883.2 158.9 885.1 158.7 886.6 159.2 C888.0 159.7 889.0 160.8 890.2 161.7 C891.4 162.7 892.6 163.9 893.8 165.0 C895.0 166.1 896.3 167.3 897.4 168.6 C898.5 169.9 899.8 171.5 900.3 173.0 C900.9 174.4 901.2 176.1 900.7 177.3 C900.2 178.5 898.9 179.6 897.4 180.2 C895.9 180.8 893.6 181.0 891.6 180.9 C889.7 180.8 887.5 180.1 885.9 179.5 C884.2 178.9 882.7 178.3 881.5 177.3 C880.3 176.3 879.6 175.1 878.6 173.7 C877.7 172.2 876.4 170.6 875.7 168.6 C875.1 166.6 874.5 163.3 874.7 161.7Z" fill="#b4a8d4" opacity=".8"/>
<path d="M872.4 159.2 C872.4 157.5 872.7 157.0 873.2 156.5 C873.8 156.0 874.8 156.1 875.7 156.1 C876.5 156.1 877.4 156.0 878.1 156.5 C878.8 157.0 879.2 158.2 879.8 159.2 C880.4 160.2 880.9 161.4 881.5 162.7 C882.1 163.9 882.7 165.1 883.2 166.5 C883.7 168.0 884.3 169.6 884.6 171.2 C884.9 172.7 885.0 174.5 884.8 175.8 C884.5 177.1 883.9 178.3 883.2 178.9 C882.5 179.6 881.4 179.8 880.5 179.7 C879.6 179.6 878.5 178.8 877.7 178.2 C876.9 177.5 876.2 176.9 875.7 175.8 C875.1 174.8 874.7 173.5 874.3 172.0 C873.8 170.4 873.2 168.7 872.9 166.5 C872.6 164.4 872.3 160.9 872.4 159.2Z" fill="#98b8a8" opacity=".7"/>
<path d="M673.8 354.7 C672.5 352.6 671.3 345.0 676.2 341.1 C681.1 337.2 695.5 334.6 703.3 331.3 C711.0 328.0 718.0 324.3 722.9 321.5 C727.8 318.6 728.7 316.5 732.8 314.1 C736.9 311.6 743.4 309.0 747.5 306.7 C751.6 304.5 752.4 303.4 757.3 300.6 C762.3 297.7 771.7 292.8 777.0 289.5 C782.3 286.2 785.6 282.1 789.3 280.9 C793.0 279.7 795.9 280.3 799.1 282.1 C802.4 284.0 806.1 287.5 809.0 292.0 C811.8 296.5 814.3 305.1 816.3 309.2 C818.4 313.3 818.4 315.9 821.3 316.5 C824.1 317.2 829.5 314.5 833.6 312.9 C837.7 311.2 841.8 309.8 845.9 306.7 C849.9 303.6 854.5 297.9 858.1 294.4 C861.8 290.9 864.7 287.9 868.0 285.8 C871.3 283.8 873.3 282.3 877.8 282.1 C882.3 281.9 890.5 282.9 895.0 284.6 C899.5 286.2 901.6 287.9 904.9 292.0 C908.1 296.1 912.2 303.0 914.7 309.2 C917.1 315.3 918.6 322.7 919.6 328.8 C920.6 335.0 921.2 342.0 920.8 346.0 C920.4 350.1 921.5 351.8 917.1 353.4 C912.8 355.1 902.8 356.3 895.0 355.9 C887.2 355.5 878.6 353.4 870.4 351.0 C862.2 348.5 852.8 344.4 845.9 341.1 C838.9 337.9 833.6 333.3 828.6 331.3 C823.7 329.2 820.9 328.4 816.3 328.8 C811.8 329.2 807.3 330.9 801.6 333.8 C795.9 336.6 788.5 342.0 781.9 346.0 C775.4 350.1 768.8 355.1 762.3 358.3 C755.7 361.6 749.1 364.5 742.6 365.7 C736.0 366.9 729.5 366.9 722.9 365.7 C716.4 364.5 709.8 360.4 703.3 358.3 C696.7 356.3 688.5 354.0 683.6 353.4 C678.7 352.8 675.0 356.7 673.8 354.7Z" fill="url(#pv)" />
<path d="M748.1 255.9 C751.2 259.0 757.9 265.4 762.8 267.0 C767.8 268.5 773.0 266.6 777.6 265.1 C782.2 263.6 785.9 261.4 790.5 257.7 C795.1 254.0 801.3 245.7 805.3 243.0 C809.2 240.2 810.8 241.4 814.5 241.1 C818.2 240.8 824.3 239.4 827.4 241.1 C830.5 242.8 830.5 249.7 832.9 251.3 C835.4 252.8 839.5 251.7 842.1 250.4 C844.7 249.0 847.7 245.7 848.6 243.0 C849.5 240.2 848.7 236.8 847.7 233.8 C846.6 230.7 844.0 227.3 842.1 224.5 C840.3 221.8 839.4 218.7 836.6 217.2 C833.8 215.6 831.7 213.2 825.5 215.3 C819.4 217.5 810.2 225.8 799.7 230.1 C789.3 234.4 772.1 238.1 762.8 241.1 C753.6 244.2 746.9 246.1 744.4 248.5 C741.9 251.0 745.0 252.8 748.1 255.9Z" fill="#8000ff" />
<path d="M746.2 263.3 C750.5 265.7 749.0 274.6 751.8 278.0 C754.5 281.4 756.4 283.2 762.8 283.5 C769.3 283.9 782.8 278.9 790.5 279.9 C798.2 280.8 804.3 283.7 808.9 289.1 C813.5 294.4 834.4 308.1 818.2 311.9 C801.9 315.8 728.4 315.8 711.2 311.9 C694.0 308.1 713.7 296.0 714.9 289.1 C716.1 282.2 716.7 274.9 718.6 270.6 C720.4 266.3 721.3 264.5 726.0 263.3 C730.6 262.0 741.9 260.8 746.2 263.3Z" fill="#8000ff" />
<path d="M572.9 262.3 C572.4 259.9 573.8 256.0 574.8 252.2 C575.7 248.4 576.3 242.8 578.4 239.3 C580.6 235.8 583.7 233.4 587.7 231.0 C591.7 228.6 596.9 226.0 602.4 224.9 C607.9 223.8 615.0 224.0 620.9 224.2 C626.7 224.4 631.6 225.0 637.4 226.0 C643.3 227.0 651.6 227.2 655.9 230.1 C660.2 232.9 664.5 238.7 663.3 243.0 C662.0 247.3 655.6 252.5 648.5 255.9 C641.4 259.3 629.5 262.0 620.9 263.3 C612.2 264.5 604.1 262.6 596.9 263.3 C589.7 263.9 581.5 267.1 577.5 267.0 C573.5 266.8 573.4 264.8 572.9 262.3Z" fill="url(#pv)" />
<path d="M577.5 267.0 C577.1 264.5 589.4 262.0 596.9 259.6 C604.4 257.1 612.9 252.2 622.7 252.2 C632.5 252.2 642.4 256.5 655.9 259.6 C669.4 262.6 694.6 265.7 703.8 270.6 C713.1 275.6 708.7 283.5 711.2 289.1 C713.7 294.6 718.6 300.0 718.6 303.8 C718.6 307.6 719.2 310.6 711.2 311.9 C703.2 313.3 674.3 313.6 670.6 311.9 C667.0 310.3 685.1 305.8 689.1 302.0 C693.1 298.2 694.9 292.6 694.6 289.1 C694.3 285.5 691.2 282.6 687.2 280.8 C683.2 278.9 675.9 278.2 670.6 278.0 C665.4 277.9 662.0 278.2 655.9 279.9 C649.7 281.6 640.8 286.9 633.8 288.2 C626.7 289.4 617.2 288.9 613.5 287.2 C609.8 285.5 613.9 280.2 611.6 278.0 C609.3 275.9 605.3 276.2 599.6 274.3 C594.0 272.5 578.0 269.4 577.5 267.0Z" fill="#e858e4" />
<path d="M622.7 259.6 C623.3 256.5 635.6 251.7 641.1 252.2 C646.7 252.7 649.4 259.6 655.9 262.3 C662.3 265.1 671.6 267.3 679.9 268.8 C688.2 270.3 701.1 268.2 705.7 271.6 C710.3 274.9 705.7 284.3 707.5 289.1 C709.4 293.8 716.1 296.3 716.7 300.1 C717.4 304.0 715.8 310.0 711.2 311.9 C706.6 313.9 690.9 313.9 689.1 311.9 C687.2 310.0 698.0 304.3 700.1 300.1 C702.3 296.0 703.8 290.9 702.0 287.2 C700.1 283.5 695.5 280.5 689.1 278.0 C682.6 275.6 671.9 273.7 663.3 272.5 C654.7 271.3 644.2 272.8 637.4 270.6 C630.7 268.5 622.1 262.6 622.7 259.6Z" fill="#f23c96" />
<path d="M668.8 314.1 C671.3 307.9 681.1 293.6 686.0 292.0 C691.0 290.3 694.7 304.7 698.3 304.3 C702.0 303.8 701.6 291.1 708.2 289.5 C714.7 287.9 731.1 291.1 737.7 294.4 C744.2 297.7 748.3 305.1 747.5 309.2 C746.7 313.3 737.7 316.1 732.8 319.0 C727.8 321.9 723.7 323.9 718.0 326.4 C712.3 328.8 704.5 331.7 698.3 333.8 C692.2 335.8 685.2 337.4 681.1 338.7 C677.0 339.9 675.4 342.8 673.8 341.1 C672.1 339.5 672.1 333.3 671.3 328.8 C670.5 324.3 666.4 320.2 668.8 314.1Z" fill="#e858e4" />
<path d="M698.3 326.4 C697.9 321.9 702.8 309.2 705.7 304.3 C708.6 299.3 710.2 298.1 715.6 296.9 C720.9 295.6 732.3 294.8 737.7 296.9 C743.0 298.9 750.0 305.1 747.5 309.2 C745.1 313.3 729.5 317.8 722.9 321.5 C716.4 325.2 712.3 330.5 708.2 331.3 C704.1 332.1 698.8 330.9 698.3 326.4Z" fill="#f04070" />
<path d="M740.7 289.1 C745.0 285.4 754.8 288.0 762.8 287.2 C770.8 286.5 782.5 284.2 788.7 284.5 C794.8 284.8 799.4 287.4 799.7 289.1 C800.0 290.8 795.1 292.8 790.5 294.6 C785.9 296.5 778.2 298.0 772.1 300.1 C765.9 302.3 759.5 306.0 753.6 307.5 C747.8 309.1 739.2 312.4 737.0 309.4 C734.9 306.3 736.4 292.8 740.7 289.1Z" fill="#dc48d0" />
<path d="M754.9 293.4 C758.0 291.8 764.8 293.0 770.4 292.6 C776.0 292.3 784.2 291.2 788.5 291.4 C792.8 291.5 796.0 292.7 796.2 293.4 C796.5 294.2 793.0 295.1 789.8 295.9 C786.6 296.8 781.2 297.5 776.9 298.4 C772.6 299.4 768.1 301.0 764.0 301.7 C759.9 302.4 753.9 304.0 752.4 302.6 C750.9 301.2 751.9 295.1 754.9 293.4Z" fill="#f0508a" />
<path d="M780.5 288.4 C782.0 287.2 785.5 288.0 788.3 287.8 C791.1 287.6 795.2 286.9 797.3 287.0 C799.5 287.1 801.1 287.8 801.2 288.4 C801.3 288.9 799.6 289.5 798.0 290.0 C796.4 290.6 793.7 291.0 791.5 291.7 C789.4 292.3 787.1 293.4 785.1 293.9 C783.0 294.3 780.0 295.4 779.3 294.4 C778.5 293.5 779.0 289.5 780.5 288.4Z" fill="#f06a30" />
<path d="M749.9 191.3 C750.9 188.6 753.0 187.7 755.5 187.7 C757.9 187.7 763.5 188.0 764.7 191.3 C765.9 194.7 765.0 204.4 762.8 207.9 C760.7 211.5 755.2 212.1 751.8 212.6 C748.4 213.0 742.9 212.1 742.6 210.7 C742.2 209.3 748.7 207.5 749.9 204.3 C751.2 201.0 749.0 194.1 749.9 191.3Z" fill="#8000ff" />
<path d="M750.7 191.4 C751.5 188.6 753.6 187.1 756.2 187.5 C758.7 187.9 764.5 188.9 766.0 193.6 C767.4 198.2 767.1 210.5 764.9 215.4 C762.7 220.3 756.4 223.0 752.9 223.0 C749.5 223.0 744.4 218.5 744.2 215.4 C744.0 212.3 750.7 208.5 751.8 204.5 C752.9 200.5 750.0 194.3 750.7 191.4Z" fill="#8000ff" />
<path d="M620.9 260.5 C625.2 255.4 637.8 242.4 646.7 235.6 C655.6 228.8 665.4 224.5 674.3 219.9 C683.2 215.4 692.9 211.2 700.1 208.3 C707.4 205.5 712.4 203.1 717.7 202.8 C722.9 202.4 726.7 204.0 731.5 206.1 C736.3 208.2 742.2 210.7 746.2 215.3 C750.2 219.9 754.2 228.5 755.5 233.8 C756.7 239.0 756.7 243.0 753.6 246.7 C750.5 250.4 742.2 253.0 737.0 255.9 C731.8 258.8 727.2 260.5 722.3 264.2 C717.4 267.9 714.9 275.7 707.5 278.0 C700.1 280.3 689.4 279.1 678.0 278.0 C666.6 276.9 648.8 273.6 639.3 271.6 C629.8 269.6 623.9 267.9 620.9 266.0 C617.8 264.2 616.5 265.6 620.9 260.5Z" fill="#b030f4" />
<path d="M750.9 192.3 C753.0 189.2 756.2 184.7 762.8 181.2 C769.4 177.7 784.0 173.7 790.5 171.1 C797.0 168.5 796.6 166.8 801.6 165.5 C806.5 164.3 815.2 162.2 820.0 163.7 C824.8 165.2 828.3 171.4 830.1 174.8 C832.0 178.1 831.1 181.2 831.1 184.0 C831.1 186.7 829.4 188.6 830.1 191.3 C830.9 194.1 834.3 197.2 835.7 200.6 C837.1 203.9 839.1 207.8 838.4 211.6 C837.8 215.5 835.4 220.1 832.0 223.6 C828.6 227.2 822.6 229.8 818.2 232.8 C813.7 235.9 811.1 239.8 805.3 242.1 C799.4 244.4 789.6 244.7 783.1 246.7 C776.7 248.7 771.8 252.4 766.5 254.0 C761.3 255.7 755.9 258.0 751.8 256.8 C747.6 255.6 742.2 252.7 741.6 246.7 C741.0 240.7 745.3 226.1 748.1 220.9 C750.9 215.6 757.0 217.2 758.2 215.3 C759.5 213.5 756.8 212.4 755.5 209.8 C754.1 207.2 750.7 202.6 749.9 199.6 C749.2 196.7 748.7 195.3 750.9 192.3Z" fill="#b030f4" />
<path d="M623.3 259.4 C627.5 254.6 639.5 242.1 648.1 235.6 C656.8 229.1 666.5 224.9 675.2 220.4 C684.0 216.0 693.5 211.8 700.6 209.0 C707.7 206.1 712.6 203.9 717.7 203.5 C722.8 203.2 726.5 204.7 731.2 206.8 C735.8 208.8 741.6 211.4 745.6 216.0 C749.5 220.5 753.6 228.9 754.8 234.0 C756.0 239.1 756.1 242.9 753.1 246.4 C750.0 250.0 741.6 252.7 736.4 255.6 C731.1 258.4 726.6 260.2 721.7 263.8 C716.9 267.4 714.5 275.1 707.3 277.3 C700.1 279.5 689.7 278.3 678.7 277.1 C667.7 276.0 650.4 272.5 641.2 270.5 C631.9 268.5 626.3 266.8 623.3 265.0 C620.4 263.1 619.2 264.3 623.3 259.4Z" fill="#ea3ad8" />
<path d="M752.1 192.3 C754.2 189.3 757.5 184.9 763.9 181.5 C770.4 178.0 784.7 174.2 791.1 171.6 C797.4 169.1 797.1 167.3 801.9 166.1 C806.7 164.8 815.2 162.6 819.9 164.1 C824.5 165.6 828.0 171.7 829.8 175.0 C831.5 178.3 830.4 181.3 830.3 184.0 C830.2 186.7 828.4 188.5 829.1 191.2 C829.8 194.0 833.2 197.0 834.6 200.3 C836.1 203.7 838.2 207.5 837.7 211.3 C837.1 215.1 834.5 219.5 831.2 223.0 C827.8 226.5 821.8 229.1 817.4 232.1 C813.0 235.2 810.6 239.0 804.9 241.3 C799.2 243.6 789.4 244.0 783.0 245.9 C776.6 247.8 771.5 251.3 766.3 252.9 C761.1 254.6 755.9 257.0 751.8 255.9 C747.7 254.8 742.3 252.0 741.8 246.2 C741.3 240.5 745.9 226.4 748.8 221.4 C751.6 216.4 757.8 218.0 759.2 216.1 C760.5 214.2 758.1 212.8 756.8 210.1 C755.5 207.4 752.0 202.8 751.3 199.8 C750.5 196.8 750.0 195.4 752.1 192.3Z" fill="#ea3ad8" />
<path d="M627.1 257.9 C630.9 253.2 642.0 241.7 650.3 235.6 C658.5 229.5 668.0 225.5 676.5 221.2 C685.0 216.9 694.4 212.7 701.3 209.9 C708.1 207.2 712.8 205.0 717.7 204.7 C722.6 204.3 726.2 205.7 730.7 207.8 C735.1 209.8 740.7 212.6 744.6 217.0 C748.4 221.4 752.5 229.5 753.8 234.3 C755.1 239.2 755.3 242.7 752.2 246.1 C749.2 249.6 740.6 252.2 735.4 255.1 C730.1 257.9 725.6 259.7 720.9 263.2 C716.2 266.7 713.8 274.1 707.0 276.2 C700.1 278.3 690.2 277.0 679.7 275.8 C669.2 274.6 652.8 271.0 644.0 268.9 C635.2 266.9 629.9 265.2 627.1 263.4 C624.3 261.6 623.2 262.5 627.1 257.9Z" fill="#f0307a" />
<path d="M754.0 192.4 C756.1 189.4 759.3 185.2 765.6 181.9 C771.9 178.6 785.8 174.9 791.9 172.4 C798.0 169.9 797.8 168.2 802.4 166.9 C807.0 165.6 815.3 163.4 819.7 164.8 C824.2 166.2 827.6 172.1 829.2 175.3 C830.7 178.5 829.4 181.3 829.1 184.0 C828.9 186.6 826.9 188.4 827.5 191.1 C828.2 193.7 831.6 196.7 833.0 200.0 C834.5 203.3 837.0 207.1 836.5 210.8 C836.0 214.5 833.3 218.7 829.9 222.1 C826.5 225.5 820.5 228.0 816.2 231.0 C812.0 234.1 810.0 238.0 804.4 240.3 C798.9 242.5 789.3 242.9 782.8 244.7 C776.4 246.6 771.2 249.7 766.0 251.3 C760.8 252.9 755.8 255.4 751.8 254.5 C747.8 253.5 742.4 250.9 742.0 245.6 C741.7 240.2 746.7 227.0 749.7 222.2 C752.8 217.5 759.1 219.2 760.6 217.3 C762.1 215.3 760.0 213.5 758.8 210.6 C757.6 207.8 754.0 203.1 753.3 200.1 C752.5 197.0 752.0 195.4 754.0 192.4Z" fill="#f0307a" />
<path d="M632.5 255.6 C636.0 251.3 645.7 241.2 653.4 235.6 C661.0 230.0 670.3 226.3 678.5 222.3 C686.6 218.2 695.7 214.0 702.2 211.3 C708.7 208.6 713.0 206.6 717.7 206.3 C722.3 205.9 725.7 207.2 729.9 209.2 C734.2 211.2 739.4 214.2 743.1 218.4 C746.9 222.7 751.1 230.3 752.4 234.8 C753.7 239.3 754.1 242.4 751.0 245.6 C748.0 248.9 739.2 251.5 733.9 254.3 C728.7 257.1 724.3 259.0 719.7 262.4 C715.1 265.8 712.9 272.7 706.5 274.7 C700.1 276.6 690.9 275.2 681.1 273.9 C671.4 272.6 656.2 268.8 648.1 266.7 C640.0 264.5 635.1 263.0 632.5 261.1 C629.9 259.3 629.0 259.8 632.5 255.6Z" fill="#ee5a30" />
<path d="M756.8 192.5 C758.8 189.5 762.0 185.6 768.0 182.5 C774.1 179.3 787.2 176.0 793.1 173.6 C798.9 171.2 798.7 169.4 803.1 168.1 C807.5 166.8 815.3 164.5 819.5 165.8 C823.7 167.0 827.0 172.7 828.3 175.8 C829.7 178.8 828.0 181.5 827.5 184.0 C826.9 186.5 824.7 188.2 825.2 190.8 C825.8 193.4 829.2 196.3 830.8 199.5 C832.4 202.7 835.3 206.5 834.8 210.1 C834.4 213.6 831.5 217.5 828.1 220.8 C824.7 224.0 818.6 226.5 814.5 229.5 C810.5 232.5 809.0 236.4 803.7 238.7 C798.4 241.0 789.0 241.4 782.6 243.1 C776.2 244.8 770.6 247.3 765.5 248.9 C760.4 250.4 755.6 253.1 751.8 252.4 C747.9 251.7 742.5 249.4 742.4 244.6 C742.3 239.8 747.8 227.7 751.2 223.4 C754.6 219.2 760.9 221.0 762.6 218.9 C764.4 216.9 762.7 214.4 761.7 211.3 C760.6 208.3 756.9 203.6 756.1 200.4 C755.3 197.3 754.8 195.5 756.8 192.5Z" fill="#ee5a30" />
<path d="M637.4 253.5 C640.6 249.6 649.1 240.6 656.3 235.6 C663.4 230.6 672.4 227.1 680.2 223.2 C688.0 219.4 696.9 215.2 703.1 212.6 C709.3 210.0 713.3 208.1 717.7 207.8 C722.0 207.5 725.3 208.5 729.3 210.5 C733.3 212.5 738.2 215.6 741.8 219.7 C745.4 223.9 749.7 231.0 751.0 235.2 C752.4 239.5 753.0 242.1 749.9 245.2 C746.9 248.3 737.8 250.9 732.6 253.7 C727.4 256.4 723.0 258.3 718.6 261.6 C714.2 264.9 712.1 271.5 706.0 273.2 C700.0 275.0 691.5 273.6 682.4 272.1 C673.4 270.7 659.3 266.7 651.8 264.6 C644.3 262.4 639.8 260.9 637.4 259.0 C635.1 257.2 634.3 257.4 637.4 253.5Z" fill="#e8a020" />
<path d="M759.3 192.6 C761.2 189.7 764.4 186.0 770.2 183.0 C776.0 180.1 788.6 177.1 794.2 174.8 C799.8 172.4 799.6 170.6 803.8 169.2 C808.0 167.9 815.3 165.5 819.3 166.6 C823.2 167.8 826.5 173.3 827.6 176.2 C828.7 179.1 826.6 181.6 825.9 184.0 C825.2 186.4 822.7 188.1 823.1 190.6 C823.6 193.1 827.0 196.0 828.7 199.1 C830.4 202.2 833.6 206.0 833.3 209.4 C832.9 212.8 829.8 216.5 826.5 219.6 C823.1 222.7 816.9 225.1 813.0 228.0 C809.1 231.0 808.1 235.0 803.0 237.3 C797.9 239.5 788.7 239.9 782.4 241.5 C776.1 243.1 770.2 245.2 765.1 246.7 C760.0 248.2 755.5 251.0 751.8 250.5 C748.1 250.0 742.6 248.1 742.7 243.7 C742.9 239.4 748.9 228.4 752.5 224.5 C756.1 220.7 762.5 222.6 764.5 220.5 C766.5 218.4 765.3 215.3 764.3 212.0 C763.4 208.7 759.6 204.0 758.8 200.8 C758.0 197.5 757.4 195.6 759.3 192.6Z" fill="#e8a020" />
<path d="M642.4 251.4 C645.2 247.8 652.5 240.1 659.1 235.6 C665.7 231.1 674.5 227.9 682.0 224.2 C689.5 220.6 698.0 216.4 704.0 213.9 C709.9 211.4 713.6 209.6 717.7 209.3 C721.8 209.0 724.8 209.9 728.6 211.9 C732.4 213.8 737.0 217.1 740.5 221.1 C744.0 225.0 748.3 231.7 749.7 235.7 C751.1 239.6 751.9 241.9 748.8 244.8 C745.8 247.6 736.5 250.3 731.3 253.0 C726.0 255.7 721.8 257.7 717.5 260.8 C713.2 264.0 711.2 270.2 705.6 271.8 C700.0 273.4 692.1 271.9 683.8 270.3 C675.4 268.8 662.5 264.7 655.6 262.5 C648.7 260.2 644.6 258.8 642.4 256.9 C640.2 255.1 639.6 254.9 642.4 251.4Z" fill="#9ab020" />
<path d="M761.9 192.7 C763.7 189.8 766.9 186.4 772.4 183.6 C778.0 180.8 790.0 178.1 795.3 175.9 C800.6 173.6 800.5 171.7 804.4 170.3 C808.4 168.9 815.3 166.5 819.0 167.5 C822.8 168.6 825.9 173.9 826.8 176.7 C827.7 179.4 825.3 181.7 824.4 184.0 C823.4 186.3 820.7 187.9 821.0 190.4 C821.4 192.8 824.8 195.6 826.6 198.7 C828.4 201.7 832.0 205.5 831.7 208.8 C831.4 212.0 828.2 215.4 824.8 218.3 C821.4 221.3 815.2 223.7 811.4 226.6 C807.7 229.5 807.3 233.6 802.4 235.8 C797.5 238.1 788.5 238.5 782.2 240.0 C775.9 241.4 769.7 243.0 764.6 244.5 C759.5 245.9 755.4 248.9 751.8 248.7 C748.2 248.4 742.7 246.7 743.1 242.8 C743.4 239.0 750.0 229.1 753.8 225.6 C757.7 222.2 764.2 224.2 766.4 222.0 C768.6 219.9 767.8 216.2 767.0 212.7 C766.1 209.2 762.3 204.4 761.4 201.1 C760.6 197.8 760.0 195.7 761.9 192.7Z" fill="#9ab020" />
<path d="M647.4 249.3 C649.8 246.1 655.9 239.6 662.0 235.6 C668.1 231.6 676.6 228.6 683.8 225.2 C690.9 221.8 699.2 217.6 704.9 215.2 C710.5 212.8 713.8 211.1 717.7 210.8 C721.5 210.5 724.4 211.2 728.0 213.2 C731.5 215.1 735.8 218.6 739.2 222.4 C742.6 226.2 747.0 232.5 748.4 236.1 C749.8 239.8 750.8 241.6 747.7 244.3 C744.6 247.0 735.2 249.7 729.9 252.3 C724.7 255.0 720.5 257.1 716.4 260.1 C712.2 263.1 710.4 268.9 705.2 270.3 C699.9 271.8 692.7 270.2 685.1 268.6 C677.5 266.9 665.6 262.6 659.4 260.4 C653.1 258.1 649.4 256.7 647.4 254.8 C645.4 253.0 645.0 252.5 647.4 249.3Z" fill="#36b030" />
<path d="M764.4 192.9 C766.2 190.0 769.3 186.8 774.6 184.2 C780.0 181.5 791.3 179.1 796.4 177.0 C801.5 174.8 801.4 172.9 805.1 171.4 C808.8 170.0 815.3 167.5 818.8 168.4 C822.3 169.4 825.4 174.5 826.0 177.1 C826.7 179.7 824.0 181.8 822.8 184.0 C821.6 186.1 818.7 187.8 818.9 190.2 C819.2 192.5 822.6 195.2 824.5 198.2 C826.3 201.2 830.4 204.9 830.2 208.1 C830.0 211.2 826.5 214.3 823.1 217.1 C819.8 220.0 813.5 222.3 809.9 225.2 C806.3 228.0 806.4 232.2 801.7 234.4 C797.1 236.6 788.2 237.1 781.9 238.4 C775.7 239.7 769.2 240.8 764.2 242.2 C759.1 243.6 755.2 246.8 751.8 246.8 C748.3 246.7 742.8 245.3 743.4 241.9 C744.0 238.6 751.0 229.8 755.2 226.8 C759.3 223.7 765.9 225.8 768.3 223.6 C770.7 221.3 770.3 217.0 769.6 213.3 C768.9 209.6 765.0 204.8 764.1 201.4 C763.2 198.0 762.7 195.7 764.4 192.9Z" fill="#36b030" />
<path d="M654.0 246.5 C656.0 243.7 660.5 238.9 665.8 235.6 C671.2 232.3 679.4 229.7 686.1 226.6 C692.8 223.4 700.8 219.2 706.0 216.9 C711.3 214.6 714.2 213.1 717.7 212.8 C721.2 212.5 723.8 213.1 727.1 215.0 C730.4 216.8 734.1 220.5 737.4 224.2 C740.7 227.8 745.1 233.5 746.6 236.7 C748.1 240.0 749.3 241.3 746.2 243.7 C743.2 246.2 733.4 248.9 728.2 251.5 C722.9 254.0 718.8 256.2 714.9 259.0 C711.0 261.9 709.2 267.2 704.6 268.4 C699.9 269.6 693.6 268.0 686.9 266.2 C680.2 264.4 669.8 259.9 664.4 257.5 C658.9 255.2 655.8 253.9 654.0 252.0 C652.3 250.2 652.1 249.2 654.0 246.5Z" fill="#1c58d0" />
<path d="M767.8 193.0 C769.5 190.2 772.6 187.3 777.6 184.9 C782.6 182.5 793.1 180.4 797.9 178.4 C802.6 176.4 802.5 174.4 806.0 172.9 C809.4 171.4 815.4 168.8 818.5 169.6 C821.7 170.4 824.6 175.3 825.0 177.7 C825.4 180.1 822.2 181.9 820.7 184.0 C819.3 186.0 816.0 187.6 816.1 189.9 C816.3 192.1 819.7 194.7 821.7 197.6 C823.7 200.5 828.2 204.2 828.1 207.2 C828.0 210.2 824.3 212.8 820.9 215.5 C817.5 218.2 811.2 220.4 807.8 223.2 C804.5 226.1 805.2 230.3 800.8 232.5 C796.5 234.7 787.9 235.2 781.6 236.3 C775.4 237.5 768.6 238.0 763.6 239.3 C758.6 240.6 755.1 244.0 751.8 244.3 C748.5 244.5 743.0 243.4 743.8 240.8 C744.7 238.1 752.5 230.7 756.9 228.2 C761.4 225.7 768.1 228.0 770.8 225.6 C773.5 223.3 773.7 218.2 773.2 214.2 C772.6 210.2 768.5 205.4 767.6 201.9 C766.7 198.3 766.2 195.8 767.8 193.0Z" fill="#1c58d0" />
<path d="M658.2 244.7 C659.9 242.3 663.3 238.5 668.2 235.6 C673.1 232.7 681.2 230.3 687.6 227.4 C694.0 224.5 701.8 220.2 706.8 217.9 C711.8 215.7 714.4 214.4 717.7 214.1 C721.0 213.8 723.4 214.2 726.5 216.1 C729.6 217.9 733.1 221.8 736.3 225.3 C739.5 228.8 744.0 234.1 745.5 237.1 C747.0 240.1 748.4 241.0 745.3 243.3 C742.2 245.7 732.3 248.4 727.1 250.9 C721.8 253.4 717.8 255.7 714.0 258.4 C710.2 261.1 708.5 266.2 704.2 267.2 C699.9 268.3 694.1 266.6 688.0 264.7 C681.9 262.8 672.5 258.2 667.5 255.8 C662.5 253.4 659.7 252.1 658.2 250.3 C656.6 248.4 656.5 247.2 658.2 244.7Z" fill="#1a9cc8" />
<path d="M769.9 193.1 C771.5 190.3 774.6 187.6 779.4 185.4 C784.2 183.1 794.3 181.3 798.8 179.4 C803.3 177.4 803.3 175.3 806.5 173.8 C809.8 172.3 815.4 169.6 818.3 170.3 C821.3 171.0 824.2 175.8 824.3 178.1 C824.5 180.3 821.1 182.0 819.5 184.0 C817.8 185.9 814.3 187.5 814.4 189.7 C814.5 191.9 817.8 194.4 819.9 197.2 C822.0 200.1 826.9 203.8 826.8 206.7 C826.8 209.5 822.9 211.9 819.5 214.5 C816.2 217.1 809.8 219.3 806.5 222.1 C803.3 224.8 804.5 229.1 800.3 231.3 C796.1 233.4 787.6 234.0 781.5 235.1 C775.3 236.1 768.2 236.2 763.2 237.4 C758.3 238.7 755.0 242.3 751.8 242.7 C748.6 243.1 743.1 242.3 744.1 240.0 C745.2 237.8 753.3 231.3 758.0 229.1 C762.7 227.0 769.4 229.3 772.3 226.9 C775.2 224.5 775.8 218.9 775.4 214.8 C775.0 210.6 770.8 205.7 769.8 202.1 C768.9 198.5 768.3 195.9 769.9 193.1Z" fill="#1a9cc8" />
<path d="M772.1 193.2 C773.6 190.4 776.7 188.0 781.3 185.8 C785.9 183.7 795.4 182.1 799.7 180.3 C804.0 178.4 804.0 176.3 807.1 174.8 C810.2 173.2 815.4 170.4 818.2 171.1 C820.9 171.7 823.7 176.3 823.7 178.4 C823.7 180.6 820.0 182.1 818.2 184.0 C816.3 185.8 812.6 187.4 812.6 189.5 C812.6 191.7 816.0 194.1 818.2 196.9 C820.3 199.6 825.5 203.3 825.5 206.1 C825.5 208.9 821.5 211.0 818.2 213.5 C814.8 215.9 808.3 218.1 805.3 220.9 C802.2 223.6 803.7 227.9 799.7 230.1 C795.7 232.2 787.4 232.8 781.3 233.8 C775.1 234.7 767.8 234.4 762.8 235.6 C757.9 236.8 754.8 240.5 751.8 241.1 C748.7 241.8 743.2 241.1 744.4 239.3 C745.6 237.4 754.2 231.9 759.2 230.1 C764.1 228.2 770.8 230.7 773.9 228.2 C777.0 225.8 777.9 219.6 777.6 215.3 C777.3 211.0 773.0 206.1 772.1 202.4 C771.1 198.7 770.5 196.0 772.1 193.2Z" fill="#1c92c8" />
<path d="M662.3 243.0 C663.7 240.8 666.2 238.1 670.6 235.6 C675.1 233.1 682.9 231.0 689.1 228.2 C695.2 225.5 702.8 221.2 707.5 219.0 C712.3 216.9 714.6 215.6 717.7 215.3 C720.7 215.0 723.0 215.3 726.0 217.2 C728.9 219.0 732.1 223.0 735.2 226.4 C738.3 229.8 742.9 234.7 744.4 237.4 C745.9 240.2 747.5 240.8 744.4 243.0 C741.3 245.1 731.2 247.9 726.0 250.4 C720.7 252.8 716.7 255.1 713.1 257.7 C709.4 260.3 707.8 265.1 703.8 266.0 C699.8 267.0 694.6 265.3 689.1 263.3 C683.5 261.3 675.1 256.5 670.6 254.0 C666.2 251.6 663.7 250.4 662.3 248.5 C661.0 246.7 661.0 245.1 662.3 243.0Z" fill="url(#teal1)" />
<path d="M783.1 191.3 C785.9 189.2 793.9 184.6 797.9 184.0 C801.9 183.4 804.0 185.2 807.1 187.7 C810.2 190.1 813.5 195.7 816.3 198.7 C819.1 201.8 824.0 203.6 823.7 206.1 C823.4 208.6 819.1 211.6 814.5 213.5 C809.9 215.3 800.9 218.1 796.0 217.2 C791.1 216.2 787.4 211.3 785.0 207.9 C782.5 204.6 781.6 199.6 781.3 196.9 C781.0 194.1 780.4 193.5 783.1 191.3Z" fill="#8fb0dc" />
<path d="M799.7 172.9 C803.1 171.2 814.5 169.2 818.2 170.1 C821.8 171.1 823.7 176.1 821.8 178.4 C820.0 180.7 811.1 183.7 807.1 184.0 C803.1 184.3 799.1 182.1 797.9 180.3 C796.6 178.4 796.3 174.6 799.7 172.9Z" fill="#7fb8d0" opacity=".8"/>
<path d="M712.1 287.4 C712.1 285.4 713.6 283.1 715.7 281.9 C717.9 280.6 722.2 279.6 725.0 280.0 C727.7 280.5 731.3 282.8 732.3 284.6 C733.4 286.5 732.6 289.2 731.4 291.1 C730.2 292.9 727.6 295.2 725.0 295.7 C722.3 296.2 717.9 295.2 715.7 293.8 C713.6 292.5 712.1 289.4 712.1 287.4Z" fill="#f0307a" stroke="#f0307a" stroke-width="13.0" stroke-linejoin="round"/>
<path d="M712.2 287.1 C712.2 285.1 713.7 282.8 715.9 281.6 C718.0 280.3 722.3 279.3 725.1 279.7 C727.9 280.2 731.4 282.5 732.5 284.3 C733.6 286.2 732.8 288.9 731.6 290.8 C730.3 292.6 727.7 294.9 725.1 295.4 C722.5 295.9 718.0 294.9 715.9 293.5 C713.7 292.2 712.2 289.1 712.2 287.1Z" fill="#ee6a30" stroke="#ee6a30" stroke-width="11.0" stroke-linejoin="round"/>
<path d="M712.4 286.8 C712.4 284.8 713.9 282.5 716.0 281.3 C718.2 280.0 722.5 279.0 725.3 279.4 C728.0 279.9 731.6 282.2 732.6 284.0 C733.7 285.9 732.9 288.6 731.7 290.5 C730.5 292.3 727.9 294.6 725.3 295.1 C722.6 295.6 718.2 294.6 716.0 293.2 C713.9 291.9 712.4 288.8 712.4 286.8Z" fill="#e8a020" stroke="#e8a020" stroke-width="9.1" stroke-linejoin="round"/>
<path d="M712.5 286.5 C712.5 284.5 714.0 282.2 716.2 281.0 C718.3 279.7 722.6 278.7 725.4 279.1 C728.2 279.6 731.7 281.9 732.8 283.7 C733.9 285.6 733.1 288.3 731.9 290.2 C730.6 292.0 728.0 294.3 725.4 294.8 C722.8 295.3 718.3 294.3 716.2 292.9 C714.0 291.6 712.5 288.5 712.5 286.5Z" fill="#9ab020" stroke="#9ab020" stroke-width="7.2" stroke-linejoin="round"/>
<path d="M712.6 286.2 C712.6 284.2 714.2 281.9 716.3 280.7 C718.5 279.5 722.8 278.4 725.5 278.9 C728.3 279.3 731.8 281.6 732.9 283.5 C734.0 285.3 733.2 288.1 732.0 289.9 C730.8 291.8 728.2 294.1 725.5 294.5 C722.9 295.0 718.5 294.1 716.3 292.7 C714.2 291.3 712.6 288.2 712.6 286.2Z" fill="#36b030" stroke="#36b030" stroke-width="5.5" stroke-linejoin="round"/>
<path d="M712.8 285.9 C712.8 283.9 714.3 281.6 716.5 280.4 C718.6 279.2 722.9 278.1 725.7 278.5 C728.5 279.0 732.0 281.3 733.1 283.1 C734.2 285.0 733.4 287.8 732.2 289.6 C730.9 291.4 728.3 293.7 725.7 294.2 C723.1 294.7 718.6 293.7 716.5 292.4 C714.3 291.0 712.8 287.9 712.8 285.9Z" fill="#1c58d0" stroke="#1c58d0" stroke-width="3.4" stroke-linejoin="round"/>
<path d="M712.9 285.6 C712.9 283.6 714.5 281.3 716.6 280.1 C718.8 278.9 723.1 277.8 725.8 278.3 C728.6 278.7 732.1 281.0 733.2 282.9 C734.3 284.7 733.5 287.5 732.3 289.3 C731.1 291.2 728.5 293.5 725.8 293.9 C723.2 294.4 718.8 293.5 716.6 292.1 C714.5 290.7 712.9 287.6 712.9 285.6Z" fill="#1a9cc8" stroke="#1a9cc8" stroke-width="1.6" stroke-linejoin="round"/>
<path d="M713.1 285.4 C713.1 283.4 714.6 281.1 716.7 279.9 C718.9 278.6 723.2 277.6 726.0 278.0 C728.7 278.5 732.3 280.8 733.3 282.6 C734.4 284.5 733.6 287.2 732.4 289.1 C731.2 290.9 728.6 293.2 726.0 293.7 C723.3 294.2 718.9 293.2 716.7 291.8 C714.6 290.5 713.1 287.4 713.1 285.4Z" fill="#7cb6e0" />
<path d="M718.3 285.6 C718.3 284.6 719.0 283.4 720.1 282.8 C721.2 282.2 723.3 281.7 724.7 281.9 C726.1 282.1 727.9 283.3 728.4 284.2 C728.9 285.1 728.6 286.5 727.9 287.4 C727.3 288.4 726.0 289.5 724.7 289.7 C723.4 290.0 721.2 289.5 720.1 288.8 C719.0 288.1 718.3 286.6 718.3 285.6Z" fill="#b8b8e0" />
<path d="M878.7 290.8 C878.4 290.1 879.7 289.2 880.6 288.8 C881.6 288.5 883.4 288.5 884.6 288.8 C885.7 289.2 887.2 290.1 887.5 290.8 C887.9 291.5 887.4 292.4 886.5 292.8 C885.6 293.1 883.4 293.4 882.1 293.1 C880.8 292.7 878.9 291.5 878.7 290.8Z" fill="#e050e0" stroke="#e050e0" stroke-width="9.0" stroke-linejoin="round"/>
<path d="M878.7 290.8 C878.4 290.1 879.7 289.2 880.6 288.8 C881.6 288.5 883.4 288.5 884.6 288.8 C885.7 289.2 887.2 290.1 887.5 290.8 C887.9 291.5 887.4 292.4 886.5 292.8 C885.6 293.1 883.4 293.4 882.1 293.1 C880.8 292.7 878.9 291.5 878.7 290.8Z" fill="#f06a60" stroke="#f06a60" stroke-width="6.3" stroke-linejoin="round"/>
<path d="M878.7 290.8 C878.4 290.1 879.7 289.2 880.6 288.8 C881.6 288.5 883.4 288.5 884.6 288.8 C885.7 289.2 887.2 290.1 887.5 290.8 C887.9 291.5 887.4 292.4 886.5 292.8 C885.6 293.1 883.4 293.4 882.1 293.1 C880.8 292.7 878.9 291.5 878.7 290.8Z" fill="#e0b030" stroke="#e0b030" stroke-width="4.0" stroke-linejoin="round"/>
<path d="M878.7 290.8 C878.4 290.1 879.7 289.2 880.6 288.8 C881.6 288.5 883.4 288.5 884.6 288.8 C885.7 289.2 887.2 290.1 887.5 290.8 C887.9 291.5 887.4 292.4 886.5 292.8 C885.6 293.1 883.4 293.4 882.1 293.1 C880.8 292.7 878.9 291.5 878.7 290.8Z" fill="#40b040" stroke="#40b040" stroke-width="1.8" stroke-linejoin="round"/>
<path d="M772.1 293.2 C772.9 291.6 778.2 288.5 781.9 287.0 C785.6 285.6 791.8 284.2 794.2 284.6 C796.7 285.0 797.9 287.9 796.7 289.5 C795.5 291.1 790.1 293.2 786.8 294.4 C783.6 295.6 779.5 297.1 777.0 296.9 C774.6 296.7 771.3 294.8 772.1 293.2Z" fill="#f05a40" />
<path d="M620.9 351.5 C620.4 350.6 623.5 347.3 624.6 346.0 C625.7 344.8 630.5 339.3 632.0 339.2 C633.4 339.0 637.6 344.9 639.3 344.8 C641.1 344.7 647.4 338.3 649.2 338.2 C650.9 338.1 654.8 343.3 656.5 343.6 C658.3 343.8 665.2 340.5 666.4 340.6 C667.6 340.8 669.6 343.9 668.8 344.8 C668.1 345.7 661.5 348.8 659.0 349.7 C656.5 350.7 647.2 354.2 644.3 354.7 C641.3 355.1 631.8 355.0 629.5 354.7 C627.2 354.3 621.4 352.3 620.9 351.5Z" fill="#f4a0c8" />
<path d="M628.3 349.7 C626.8 347.9 631.1 343.0 633.2 342.4 C635.2 341.7 637.9 346.0 640.6 346.0 C643.2 346.0 647.1 342.0 649.2 342.4 C651.2 342.8 654.1 346.7 652.9 348.5 C651.6 350.4 645.9 353.2 641.8 353.4 C637.7 353.6 629.7 351.6 628.3 349.7Z" fill="#f46a58" />
<path d="M613.5 351.0 C611.1 353.2 613.3 362.8 614.8 368.2 C616.2 373.5 618.8 379.0 622.1 382.9 C625.4 386.8 629.9 390.1 634.4 391.5 C638.9 393.0 644.7 393.4 649.2 391.5 C653.7 389.7 658.2 385.2 661.5 380.5 C664.7 375.8 667.4 369.4 668.8 363.3 C670.3 357.1 671.3 346.5 670.1 343.6 C668.8 340.7 664.9 344.4 661.5 346.0 C658.0 347.7 654.5 352.0 649.2 353.4 C643.8 354.9 635.4 355.1 629.5 354.7 C623.6 354.2 616.0 348.7 613.5 351.0Z" fill="url(#pv)" />
<path d="M934.4 358.3 C935.2 355.7 939.3 352.0 944.2 349.7 C949.1 347.5 958.7 345.8 963.9 344.8 C969.0 343.8 972.5 342.6 974.9 343.6 C977.3 344.6 978.3 347.9 978.1 351.0 C977.9 354.0 976.5 358.8 973.7 362.0 C970.9 365.3 965.5 369.0 961.4 370.6 C957.3 372.3 952.8 372.7 949.1 371.9 C945.4 371.0 941.7 368.0 939.3 365.7 C936.8 363.5 933.5 361.0 934.4 358.3Z" fill="url(#pv)" />
<path d="M1027.2 306.0 C1027.9 302.8 1030.8 297.2 1032.4 295.7 C1033.9 294.1 1035.4 295.7 1036.7 296.5 C1038.0 297.4 1037.7 302.1 1040.1 300.8 C1042.6 299.5 1046.3 290.5 1051.3 288.8 C1056.3 287.0 1064.2 288.8 1070.2 290.5 C1076.3 292.2 1082.0 296.2 1087.4 299.1 C1092.9 302.0 1098.6 304.7 1102.9 307.7 C1107.2 310.7 1111.8 314.0 1113.3 317.2 C1114.7 320.3 1113.8 323.0 1111.5 326.6 C1109.2 330.2 1104.1 334.7 1099.5 338.7 C1094.9 342.7 1089.2 346.3 1084.0 350.7 C1078.8 355.2 1072.5 363.3 1068.5 365.3 C1064.5 367.4 1062.8 364.9 1059.9 362.8 C1057.0 360.6 1054.5 355.9 1051.3 352.4 C1048.1 349.0 1043.8 346.1 1041.0 342.1 C1038.1 338.1 1036.2 332.9 1034.1 328.3 C1031.9 323.8 1029.2 318.3 1028.1 314.6 C1026.9 310.9 1026.5 309.1 1027.2 306.0Z" fill="#8000ff" />
<path d="M1038.4 302.5 C1041.0 296.2 1046.0 290.8 1051.3 288.8 C1056.6 286.8 1064.2 288.8 1070.2 290.5 C1076.3 292.2 1082.0 296.2 1087.4 299.1 C1092.9 302.0 1098.6 304.7 1102.9 307.7 C1107.2 310.7 1113.8 312.9 1113.3 317.2 C1112.7 321.5 1105.2 327.9 1099.5 333.5 C1093.7 339.1 1085.1 346.1 1078.8 350.7 C1072.5 355.3 1066.2 360.5 1061.6 361.0 C1057.0 361.6 1055.0 357.3 1051.3 354.2 C1047.6 351.0 1041.8 346.7 1039.3 342.1 C1036.7 337.5 1036.0 333.2 1035.8 326.6 C1035.7 320.0 1035.8 308.8 1038.4 302.5Z" fill="#e050e0" />
<path d="M1038.4 318.0 C1039.1 312.0 1040.5 303.4 1044.4 299.1 C1048.3 294.8 1054.7 292.2 1061.6 292.2 C1068.5 292.2 1078.5 296.2 1085.7 299.1 C1092.9 302.0 1100.1 306.3 1104.6 309.4 C1109.2 312.6 1113.0 314.9 1113.3 318.0 C1113.5 321.2 1110.1 324.3 1106.4 328.3 C1102.6 332.4 1096.3 338.1 1090.9 342.1 C1085.4 346.1 1080.0 351.0 1073.7 352.4 C1067.4 353.9 1058.6 353.6 1053.0 350.7 C1047.4 347.9 1042.6 340.7 1040.1 335.2 C1037.7 329.8 1037.7 324.0 1038.4 318.0Z" fill="#f0307a" />
<path d="M1041.5 318.0 C1042.2 312.6 1043.6 304.8 1047.3 300.9 C1051.0 297.0 1057.1 294.7 1063.7 294.7 C1070.3 294.6 1079.9 298.1 1086.8 300.6 C1093.6 303.2 1100.5 307.3 1104.9 310.2 C1109.3 313.1 1112.8 315.3 1113.0 318.2 C1113.2 321.0 1109.6 323.9 1105.9 327.6 C1102.1 331.2 1095.9 336.5 1090.6 340.0 C1085.3 343.6 1079.9 347.9 1073.9 349.1 C1067.9 350.3 1059.7 350.0 1054.6 347.4 C1049.4 344.7 1045.1 338.1 1043.0 333.2 C1040.8 328.3 1040.8 323.4 1041.5 318.0Z" fill="#ee5a30" />
<path d="M1044.6 318.0 C1045.3 313.3 1046.6 306.2 1050.1 302.7 C1053.6 299.2 1059.5 297.2 1065.8 297.1 C1072.0 297.0 1081.2 299.9 1087.8 302.2 C1094.4 304.5 1101.0 308.3 1105.2 311.0 C1109.3 313.6 1112.7 315.6 1112.7 318.3 C1112.8 320.9 1109.1 323.5 1105.3 326.8 C1101.6 330.1 1095.6 334.8 1090.4 338.0 C1085.2 341.1 1079.9 344.7 1074.2 345.7 C1068.5 346.7 1060.9 346.4 1056.1 344.0 C1051.4 341.6 1047.7 335.4 1045.8 331.1 C1043.9 326.8 1043.9 322.8 1044.6 318.0Z" fill="#e8a020" />
<path d="M1047.3 318.0 C1048.0 313.8 1049.2 307.4 1052.6 304.3 C1055.9 301.1 1061.5 299.4 1067.5 299.2 C1073.6 299.1 1082.4 301.5 1088.7 303.5 C1095.0 305.6 1101.4 309.2 1105.4 311.6 C1109.4 314.1 1112.6 316.0 1112.5 318.4 C1112.4 320.8 1108.6 323.2 1104.9 326.1 C1101.2 329.1 1095.2 333.4 1090.1 336.2 C1085.1 339.0 1079.9 342.0 1074.4 342.8 C1069.0 343.6 1061.8 343.4 1057.5 341.1 C1053.1 338.8 1050.0 333.2 1048.3 329.3 C1046.6 325.5 1046.6 322.2 1047.3 318.0Z" fill="#9ab020" />
<path d="M1050.0 318.0 C1050.7 314.4 1051.8 308.6 1055.0 305.8 C1058.2 303.1 1063.6 301.5 1069.3 301.4 C1075.1 301.2 1083.5 303.1 1089.6 304.9 C1095.6 306.7 1101.8 310.0 1105.6 312.3 C1109.4 314.6 1112.5 316.3 1112.3 318.5 C1112.1 320.7 1108.2 322.8 1104.4 325.5 C1100.7 328.1 1094.9 332.0 1089.9 334.4 C1084.9 336.8 1079.8 339.3 1074.6 339.9 C1069.5 340.5 1062.8 340.3 1058.8 338.2 C1054.8 336.1 1052.2 330.9 1050.7 327.5 C1049.2 324.2 1049.2 321.6 1050.0 318.0Z" fill="#36b030" />
<path d="M1053.5 318.0 C1054.2 315.1 1055.2 310.2 1058.2 307.9 C1061.3 305.6 1066.3 304.4 1071.7 304.1 C1077.1 303.9 1085.0 305.1 1090.7 306.6 C1096.4 308.1 1102.4 311.2 1105.9 313.2 C1109.4 315.2 1112.3 316.8 1112.0 318.6 C1111.7 320.5 1107.6 322.3 1103.9 324.6 C1100.1 326.8 1094.4 330.1 1089.6 332.1 C1084.8 334.0 1079.8 335.7 1074.9 336.1 C1070.1 336.5 1064.1 336.2 1060.6 334.4 C1057.1 332.6 1055.1 327.9 1053.9 325.2 C1052.8 322.5 1052.8 320.9 1053.5 318.0Z" fill="#1c58d0" />
<path d="M1056.4 318.0 C1057.1 315.7 1058.0 311.5 1060.9 309.6 C1063.8 307.6 1068.5 306.7 1073.6 306.4 C1078.7 306.2 1086.3 306.8 1091.7 308.1 C1097.1 309.3 1102.8 312.1 1106.1 313.9 C1109.5 315.7 1112.2 317.1 1111.8 318.8 C1111.3 320.4 1107.1 322.0 1103.4 323.9 C1099.6 325.8 1094.1 328.6 1089.4 330.1 C1084.7 331.7 1079.7 332.8 1075.2 333.0 C1070.6 333.2 1065.1 332.9 1062.0 331.3 C1058.9 329.6 1057.5 325.5 1056.6 323.3 C1055.6 321.0 1055.6 320.3 1056.4 318.0Z" fill="#1a9cc8" />
<path d="M1059.0 318.0 C1059.8 316.3 1060.6 312.7 1063.3 311.1 C1066.1 309.6 1070.5 308.8 1075.4 308.6 C1080.3 308.3 1087.4 308.4 1092.6 309.4 C1097.8 310.4 1103.2 313.0 1106.4 314.6 C1109.5 316.2 1112.1 317.4 1111.5 318.9 C1111.0 320.3 1106.7 321.6 1102.9 323.2 C1099.2 324.8 1093.7 327.2 1089.2 328.3 C1084.6 329.5 1079.7 330.1 1075.4 330.1 C1071.1 330.1 1066.1 329.8 1063.3 328.3 C1060.6 326.9 1059.8 323.2 1059.0 321.5 C1058.3 319.7 1058.3 319.7 1059.0 318.0Z" fill="#8cc4e0" />
<path d="M1078.8 314.6 C1080.0 312.4 1088.0 311.9 1092.6 312.0 C1097.2 312.1 1103.5 314.3 1106.4 315.4 C1109.2 316.6 1111.0 317.6 1109.8 318.9 C1108.7 320.2 1103.5 322.2 1099.5 323.2 C1095.5 324.2 1089.2 326.3 1085.7 324.9 C1082.3 323.5 1077.7 316.7 1078.8 314.6Z" fill="#a0a8dc" />
<path d="M1111.9 320.1 C1113.6 319.6 1113.6 323.5 1111.5 326.6 C1109.5 329.7 1104.1 334.7 1099.5 338.7 C1094.9 342.7 1089.2 346.3 1084.0 350.7 C1078.8 355.2 1072.0 363.3 1068.5 365.3 C1065.1 367.4 1062.2 366.0 1063.3 363.1 C1064.5 360.2 1071.4 352.4 1075.4 348.1 C1079.4 343.9 1083.1 340.9 1087.4 337.8 C1091.7 334.7 1097.1 332.7 1101.2 329.7 C1105.3 326.8 1110.2 320.6 1111.9 320.1Z" fill="#8000ff" />
<path d="M1110.2 433.6 L1113.5 418.9 L1127.4 422.2 L1129.0 428.7 L1145.4 436.9 L1148.6 445.1 L1174.8 451.6 L1176.4 458.2 L1192.8 464.7 L1197.7 474.5 L1215.6 479.4 L1227.1 484.3 L1225.4 494.1 L1220.5 491.7 L1210.7 486.8 L1194.4 479.4 L1192.8 471.2 L1169.9 461.4 L1142.1 460.6 L1129.0 456.5 L1116.0 446.7Z" fill="#9ad0e4" />
<path d="M1110.2 435.6 L1113.5 420.9 L1127.4 424.2 L1129.0 430.7 L1145.4 438.9 L1148.6 447.1 L1174.8 453.6 L1176.4 460.2 L1192.8 466.7 L1197.7 476.5 L1215.6 481.4 L1227.1 486.3 L1225.4 496.1 L1220.5 493.7 L1210.7 488.8 L1194.4 481.4 L1192.8 473.2 L1169.9 463.4 L1142.1 462.6 L1129.0 458.5 L1116.0 448.7Z" fill="#e0e0e0" opacity=".6"/>
<path d="M1110.2 433.6 L1113.5 418.9 L1127.4 422.2 L1129.0 428.7 L1145.4 436.9 L1148.6 445.1 L1174.8 451.6 L1176.4 458.2 L1192.8 464.7 L1197.7 474.5 L1215.6 479.4 L1227.1 484.3 L1225.4 494.1 L1220.5 491.7 L1210.7 486.8 L1194.4 479.4 L1192.8 471.2 L1169.9 461.4 L1142.1 460.6 L1129.0 456.5 L1116.0 446.7Z" fill="#9ad0e4" />
<path d="M1109.0 414.7 L1110.6 419.6 L1123.7 424.5 L1125.4 431.1 L1141.7 439.2 L1145.0 447.4 L1171.1 453.9 L1172.7 460.5 L1189.1 467.0 L1194.0 476.8 L1210.3 481.7 L1223.4 486.6 L1236.5 468.7 L1246.3 453.9 L1250.0 443.4 L1240.2 458.2 L1227.1 476.1 L1214.0 471.2 L1197.7 466.3 L1192.8 456.5 L1176.4 450.0 L1174.8 443.4 L1148.6 436.9 L1145.4 428.7 L1129.0 420.6 L1127.4 414.0 L1114.3 409.1 L1112.7 404.2Z" fill="#30d8e8" />
<path d="M1109.5 413.4 L1111.1 418.3 L1124.2 423.2 L1125.8 429.8 L1142.2 437.9 L1145.4 446.1 L1171.6 452.6 L1173.2 459.2 L1189.5 465.7 L1194.4 475.5 L1210.8 480.4 L1223.9 485.3 L1236.9 467.4 L1246.7 452.6 L1250.0 443.4 L1240.2 458.2 L1227.1 476.1 L1214.0 471.2 L1197.7 466.3 L1192.8 456.5 L1176.4 450.0 L1174.8 443.4 L1148.6 436.9 L1145.4 428.7 L1129.0 420.6 L1127.4 414.0 L1114.3 409.1 L1112.7 404.2Z" fill="#2a9ac8" />
<path d="M1110.0 412.0 L1111.6 416.9 L1124.7 421.8 L1126.3 428.4 L1142.6 436.5 L1145.9 444.7 L1172.1 451.2 L1173.7 457.8 L1190.0 464.3 L1194.9 474.1 L1211.3 479.0 L1224.4 483.9 L1237.4 466.0 L1247.2 451.2 L1250.0 443.4 L1240.2 458.2 L1227.1 476.1 L1214.0 471.2 L1197.7 466.3 L1192.8 456.5 L1176.4 450.0 L1174.8 443.4 L1148.6 436.9 L1145.4 428.7 L1129.0 420.6 L1127.4 414.0 L1114.3 409.1 L1112.7 404.2Z" fill="#30b040" />
<path d="M1110.5 410.4 L1112.1 415.3 L1125.2 420.2 L1126.9 426.8 L1143.2 434.9 L1146.5 443.1 L1172.6 449.6 L1174.3 456.2 L1190.6 462.7 L1195.5 472.5 L1211.8 477.4 L1224.9 482.3 L1238.0 464.4 L1247.8 449.6 L1250.0 443.4 L1240.2 458.2 L1227.1 476.1 L1214.0 471.2 L1197.7 466.3 L1192.8 456.5 L1176.4 450.0 L1174.8 443.4 L1148.6 436.9 L1145.4 428.7 L1129.0 420.6 L1127.4 414.0 L1114.3 409.1 L1112.7 404.2Z" fill="#98c020" />
<path d="M1111.0 408.9 L1112.7 413.8 L1125.7 418.7 L1127.4 425.3 L1143.7 433.4 L1147.0 441.6 L1173.1 448.1 L1174.8 454.7 L1191.1 461.2 L1196.0 471.0 L1212.4 475.9 L1225.4 480.8 L1238.5 462.9 L1248.3 448.1 L1250.0 443.4 L1240.2 458.2 L1227.1 476.1 L1214.0 471.2 L1197.7 466.3 L1192.8 456.5 L1176.4 450.0 L1174.8 443.4 L1148.6 436.9 L1145.4 428.7 L1129.0 420.6 L1127.4 414.0 L1114.3 409.1 L1112.7 404.2Z" fill="#f07030" />
<path d="M1111.5 407.5 L1113.2 412.4 L1126.2 417.3 L1127.9 423.9 L1144.2 432.0 L1147.5 440.2 L1173.6 446.7 L1175.3 453.3 L1191.6 459.8 L1196.5 469.6 L1212.9 474.5 L1225.9 479.4 L1239.0 461.5 L1248.8 446.7 L1250.0 443.4 L1240.2 458.2 L1227.1 476.1 L1214.0 471.2 L1197.7 466.3 L1192.8 456.5 L1176.4 450.0 L1174.8 443.4 L1148.6 436.9 L1145.4 428.7 L1129.0 420.6 L1127.4 414.0 L1114.3 409.1 L1112.7 404.2Z" fill="#f04090" />
<path d="M1112.1 406.0 L1113.7 410.9 L1126.8 415.8 L1128.4 422.4 L1144.7 430.5 L1148.0 438.7 L1174.2 445.2 L1175.8 451.8 L1192.1 458.3 L1197.0 468.1 L1213.4 473.0 L1226.5 477.9 L1239.5 460.0 L1249.3 445.2 L1250.0 443.4 L1240.2 458.2 L1227.1 476.1 L1214.0 471.2 L1197.7 466.3 L1192.8 456.5 L1176.4 450.0 L1174.8 443.4 L1148.6 436.9 L1145.4 428.7 L1129.0 420.6 L1127.4 414.0 L1114.3 409.1 L1112.7 404.2Z" fill="#e050e0" />
<path d="M1094.7 404.2 L1112.7 404.2 L1114.3 418.9 L1109.4 436.9 L1101.2 435.3 L1093.9 422.2Z" fill="url(#lf7)" />
<path d="M1250.0 443.4 L1253.2 441.8 L1270.4 454.9 L1264.7 471.2 L1259.8 469.6 L1250.0 456.5Z" fill="url(#rf7)" />
<path d="M1094.7 404.2 C1094.7 403.7 1109.4 398.9 1112.7 397.7 C1116.0 396.5 1131.2 391.2 1133.9 389.5 C1136.7 387.8 1144.0 378.3 1145.4 377.3 C1146.7 376.2 1149.5 376.3 1150.3 376.8 C1151.1 377.2 1153.7 382.1 1155.2 383.0 C1156.7 383.8 1166.1 386.2 1168.2 387.1 C1170.4 387.9 1179.1 391.5 1181.3 392.8 C1183.5 394.1 1191.9 400.8 1194.4 402.6 C1196.8 404.4 1208.0 412.1 1210.7 414.0 C1213.5 415.9 1224.4 423.8 1227.1 425.5 C1229.8 427.1 1241.2 432.5 1243.4 433.6 C1245.6 434.7 1251.7 437.5 1253.2 438.5 C1254.7 439.6 1261.7 446.3 1261.4 446.7 C1261.1 447.1 1251.7 442.5 1250.0 443.4 C1248.2 444.4 1242.1 455.4 1240.2 458.2 C1238.3 460.9 1229.3 475.0 1227.1 476.1 C1224.9 477.2 1216.5 472.0 1214.0 471.2 C1211.6 470.4 1199.4 467.5 1197.7 466.3 C1195.9 465.1 1194.5 457.9 1192.8 456.5 C1191.0 455.2 1177.9 451.1 1176.4 450.0 C1174.9 448.9 1177.1 444.5 1174.8 443.4 C1172.5 442.4 1151.1 438.1 1148.6 436.9 C1146.2 435.7 1147.0 430.1 1145.4 428.7 C1143.7 427.4 1130.5 421.8 1129.0 420.6 C1127.5 419.3 1128.6 415.0 1127.4 414.0 C1126.2 413.1 1115.5 409.9 1114.3 409.1 C1113.1 408.3 1114.3 404.6 1112.7 404.2 C1111.1 403.8 1094.7 404.8 1094.7 404.2Z" fill="url(#pv2)" />
<path d="M1243.4 433.6 L1253.2 438.5 L1261.4 446.7 L1270.4 454.9 L1267.9 456.5 L1253.2 443.4 L1250.0 443.4 L1240.2 458.2 L1227.1 446.7Z" fill="#8000ff" />
<path d="M1236.1 440.2 C1236.6 438.9 1239.3 437.6 1241.0 437.7 C1242.6 437.9 1245.5 439.8 1245.9 441.0 C1246.3 442.2 1244.8 444.4 1243.4 445.1 C1242.1 445.8 1238.9 445.9 1237.7 445.1 C1236.5 444.3 1235.5 441.4 1236.1 440.2Z" fill="#c050d8" />
<path d="M752.0 444.6 C752.7 442.9 755.8 439.8 758.5 439.2 C761.3 438.5 768.6 439.4 772.7 439.7 C776.8 440.1 785.3 441.1 789.0 441.9 C792.8 442.7 797.4 444.3 801.0 445.7 C804.7 447.1 812.1 451.5 816.3 452.2 C820.5 453.0 828.6 451.0 832.6 451.2 C836.7 451.3 843.5 452.2 846.8 453.3 C850.2 454.5 855.2 458.2 857.7 459.9 C860.3 461.5 865.9 464.7 865.9 465.9 C865.9 467.0 860.7 467.9 857.7 468.6 C854.7 469.3 847.3 469.8 843.5 470.8 C839.8 471.8 832.1 474.2 829.4 476.2 C826.6 478.3 824.6 483.3 822.8 486.0 C821.1 488.8 817.9 494.3 816.3 496.9 C814.7 499.6 812.4 504.3 810.8 505.7 C809.2 507.0 806.2 507.4 804.3 507.3 C802.4 507.1 798.7 506.5 796.7 504.6 C794.6 502.6 792.2 496.4 789.0 492.6 C785.8 488.8 776.6 480.3 772.7 476.2 C768.8 472.2 762.2 465.3 759.6 462.1 C757.0 458.9 754.1 454.6 753.1 452.2 C752.1 449.9 751.3 446.4 752.0 444.6Z" fill="#a020f8" />
<path d="M755.4 446.3 C756.1 444.7 758.9 441.8 761.5 441.2 C764.1 440.6 770.9 441.4 774.7 441.7 C778.5 442.1 786.4 443.0 789.9 443.8 C793.4 444.5 797.7 446.0 801.0 447.3 C804.4 448.6 811.3 452.7 815.2 453.4 C819.1 454.1 826.6 452.2 830.4 452.4 C834.2 452.5 840.5 453.3 843.6 454.4 C846.7 455.5 851.4 458.9 853.7 460.5 C856.1 462.0 861.3 465.0 861.3 466.1 C861.3 467.1 856.5 468.0 853.7 468.6 C851.0 469.2 844.1 469.7 840.6 470.6 C837.1 471.6 830.0 473.8 827.4 475.7 C824.8 477.6 822.9 482.2 821.3 484.8 C819.7 487.4 816.7 492.5 815.2 495.0 C813.7 497.4 811.6 501.8 810.2 503.1 C808.7 504.3 805.8 504.7 804.1 504.6 C802.3 504.4 798.9 503.9 797.0 502.0 C795.1 500.2 792.9 494.4 789.9 490.9 C786.9 487.4 778.3 479.5 774.7 475.7 C771.0 471.9 765.0 465.5 762.5 462.5 C760.1 459.5 757.4 455.6 756.4 453.4 C755.5 451.2 754.7 447.9 755.4 446.3Z" fill="#e850d8" />
<path d="M753.6 450.6 C753.9 448.1 757.3 441.6 760.2 440.3 C763.0 439.0 770.7 440.4 774.9 440.8 C779.0 441.2 787.2 442.5 791.2 443.5 C795.3 444.5 801.8 447.0 805.4 448.4 C809.0 449.9 815.1 453.7 818.5 454.4 C821.8 455.1 827.0 453.5 830.5 453.6 C834.0 453.6 841.6 453.7 844.6 455.0 C847.7 456.3 854.2 461.3 853.4 463.1 C852.5 465.0 841.4 467.3 838.1 468.6 C834.8 469.9 830.3 471.2 828.3 473.0 C826.2 474.7 824.3 479.6 822.8 481.7 C821.4 483.7 819.4 486.3 817.4 488.2 C815.3 490.1 810.3 495.3 807.6 495.8 C804.8 496.4 799.9 494.5 796.7 492.6 C793.5 490.7 787.2 484.7 783.6 481.7 C780.0 478.6 772.8 472.7 769.4 469.7 C766.0 466.6 760.1 461.3 758.0 458.8 C755.9 456.2 753.3 453.1 753.6 450.6Z" fill="#f050c0" />
<path d="M754.5 450.4 C754.8 448.0 758.1 441.9 760.9 440.7 C763.7 439.5 771.3 440.8 775.4 441.3 C779.4 441.8 787.4 443.2 791.4 444.3 C795.4 445.3 801.8 447.9 805.4 449.3 C809.0 450.8 814.9 454.5 818.1 455.2 C821.4 456.0 826.5 454.6 830.0 454.7 C833.5 454.7 841.4 454.6 844.3 455.7 C847.2 456.9 852.8 461.7 851.9 463.3 C850.9 465.0 840.5 467.0 837.3 468.1 C834.1 469.3 829.8 470.5 827.8 472.1 C825.8 473.7 823.8 478.3 822.3 480.2 C820.9 482.1 818.9 484.8 816.9 486.6 C814.9 488.4 809.9 493.2 807.2 493.7 C804.6 494.3 799.8 492.4 796.7 490.6 C793.6 488.8 787.5 483.2 783.9 480.4 C780.4 477.5 773.3 472.0 769.9 469.0 C766.6 466.1 760.8 460.9 758.7 458.5 C756.7 456.0 754.2 452.7 754.5 450.4Z" fill="#f0407a" />
<path d="M755.5 450.1 C755.8 447.8 759.0 442.2 761.7 441.1 C764.5 440.0 771.9 441.3 775.9 441.9 C779.9 442.4 787.6 444.0 791.6 445.1 C795.5 446.2 801.9 448.9 805.4 450.4 C808.9 451.8 814.6 455.4 817.8 456.2 C821.0 456.9 825.9 455.9 829.4 455.9 C832.9 456.0 841.2 455.5 843.9 456.5 C846.7 457.6 851.2 462.0 850.2 463.5 C849.2 465.0 839.4 466.6 836.3 467.6 C833.3 468.6 829.2 469.8 827.2 471.2 C825.3 472.7 823.2 476.7 821.8 478.5 C820.3 480.3 818.3 483.0 816.3 484.7 C814.3 486.4 809.5 490.8 806.9 491.3 C804.3 491.8 799.7 490.0 796.7 488.4 C793.7 486.7 787.8 481.6 784.3 478.9 C780.8 476.2 773.8 471.1 770.5 468.3 C767.2 465.5 761.5 460.5 759.6 458.1 C757.6 455.7 755.3 452.4 755.5 450.1Z" fill="#ee7a30" />
<path d="M756.5 449.8 C756.8 447.7 759.9 442.6 762.5 441.6 C765.2 440.6 772.5 441.8 776.4 442.4 C780.3 442.9 787.9 444.7 791.7 445.9 C795.6 447.1 802.0 449.8 805.4 451.3 C808.8 452.8 814.3 456.3 817.4 457.0 C820.6 457.8 825.4 457.1 828.9 457.1 C832.4 457.2 841.0 456.5 843.6 457.3 C846.2 458.2 849.7 462.4 848.6 463.7 C847.6 465.0 838.4 466.2 835.5 467.1 C832.6 468.0 828.6 469.0 826.7 470.3 C824.8 471.7 822.7 475.3 821.3 477.0 C819.8 478.7 817.8 481.4 815.8 483.0 C813.8 484.6 809.1 488.6 806.5 489.0 C804.0 489.5 799.6 487.8 796.7 486.3 C793.8 484.8 788.1 480.0 784.6 477.5 C781.2 475.0 774.2 470.2 771.0 467.6 C767.8 465.0 762.3 460.1 760.3 457.7 C758.4 455.4 756.2 452.0 756.5 449.8Z" fill="#b0b020" />
<path d="M757.5 449.6 C757.8 447.5 760.7 442.9 763.3 442.0 C765.9 441.1 773.2 442.3 777.0 442.9 C780.8 443.5 788.1 445.4 791.9 446.7 C795.7 447.9 802.0 450.8 805.4 452.3 C808.7 453.8 814.0 457.1 817.1 457.9 C820.1 458.7 824.9 458.3 828.4 458.3 C831.9 458.3 840.7 457.4 843.2 458.1 C845.7 458.9 848.2 462.7 847.1 463.8 C845.9 465.0 837.4 465.9 834.6 466.6 C831.8 467.4 828.0 468.3 826.2 469.5 C824.3 470.6 822.2 473.8 820.7 475.4 C819.3 477.0 817.2 479.7 815.3 481.2 C813.4 482.8 808.7 486.4 806.2 486.8 C803.7 487.2 799.5 485.6 796.7 484.2 C793.9 482.8 788.3 478.4 785.0 476.1 C781.6 473.8 774.7 469.4 771.5 466.9 C768.3 464.4 763.0 459.7 761.1 457.4 C759.2 455.1 757.2 451.6 757.5 449.6Z" fill="#36b030" />
<path d="M758.5 449.3 C758.8 447.3 761.6 443.3 764.2 442.5 C766.7 441.7 773.8 442.8 777.6 443.5 C781.3 444.2 788.4 446.2 792.1 447.6 C795.8 448.9 802.1 451.8 805.4 453.3 C808.7 454.9 813.7 458.1 816.7 458.9 C819.7 459.7 824.3 459.6 827.8 459.6 C831.3 459.6 840.5 458.4 842.8 459.0 C845.2 459.6 846.5 463.1 845.3 464.0 C844.1 465.0 836.3 465.5 833.6 466.1 C831.0 466.7 827.4 467.5 825.6 468.5 C823.8 469.5 821.6 472.2 820.2 473.6 C818.7 475.1 816.6 477.9 814.7 479.3 C812.8 480.7 808.2 483.9 805.8 484.2 C803.4 484.6 799.4 483.1 796.7 481.9 C794.0 480.6 788.7 476.6 785.4 474.5 C782.1 472.4 775.2 468.4 772.1 466.1 C769.0 463.8 763.8 459.2 762.0 457.0 C760.2 454.8 758.2 451.2 758.5 449.3Z" fill="#1c40c8" />
<path d="M759.6 449.0 C759.9 447.2 762.6 443.6 765.1 443.0 C767.5 442.3 774.5 443.3 778.1 444.1 C781.8 444.8 788.7 447.1 792.3 448.4 C795.9 449.8 802.2 452.9 805.4 454.4 C808.6 456.0 813.4 459.0 816.3 459.9 C819.2 460.7 823.7 461.0 827.2 461.0 C830.7 461.0 840.3 459.4 842.5 459.9 C844.6 460.3 844.9 463.5 843.5 464.2 C842.2 465.0 835.1 465.1 832.6 465.5 C830.2 466.0 826.8 466.7 825.0 467.5 C823.3 468.3 821.0 470.6 819.6 471.9 C818.1 473.2 816.0 476.0 814.1 477.3 C812.2 478.6 807.7 481.4 805.4 481.7 C803.1 482.0 799.3 480.7 796.7 479.5 C794.1 478.3 789.0 474.8 785.8 473.0 C782.6 471.1 775.7 467.5 772.7 465.3 C769.6 463.1 764.6 458.8 762.9 456.6 C761.1 454.4 759.3 450.8 759.6 449.0Z" fill="#7a7cc8" />
<path d="M761.8 450.1 C762.2 448.1 763.4 445.4 766.2 444.6 C768.9 443.8 774.0 444.3 778.1 445.2 C782.3 446.0 788.1 447.4 791.2 449.5 C794.3 451.6 796.7 454.9 796.7 457.7 C796.7 460.5 793.8 464.6 791.2 466.4 C788.7 468.2 784.7 469.1 781.4 468.6 C778.1 468.1 774.5 465.1 771.6 463.1 C768.7 461.1 765.6 458.8 764.0 456.6 C762.3 454.4 761.4 452.1 761.8 450.1Z" fill="#94b49c" />
<path d="M809.8 461.0 C810.1 459.7 814.3 460.5 816.3 461.0 C818.3 461.4 821.4 462.1 821.7 463.7 C822.1 465.3 819.9 468.7 818.5 470.8 C817.0 472.9 815.2 474.8 813.0 476.2 C810.8 477.7 807.4 479.3 805.4 479.5 C803.4 479.7 800.7 478.4 801.0 477.3 C801.4 476.2 805.4 474.4 807.6 473.0 C809.8 471.5 813.8 470.6 814.1 468.6 C814.5 466.6 809.4 462.2 809.8 461.0Z" fill="#28b8a0" opacity=".85"/>
<path d="M796.7 457.7 C799.2 456.2 804.5 458.6 807.6 459.9 C810.7 461.1 815.2 463.1 815.2 465.3 C815.2 467.5 810.3 471.3 807.6 473.0 C804.9 474.6 801.4 475.9 798.9 475.1 C796.3 474.4 792.7 471.5 792.3 468.6 C792.0 465.7 794.1 459.2 796.7 457.7Z" fill="#7a78c8" />
<path d="M881.1 482.2 L889.3 482.0 L892.6 486.6 L887.1 484.4Z" fill="#9010ff" />
<path d="M792.3 496.9 C793.0 496.4 798.1 500.7 801.0 501.3 C803.9 501.8 807.2 501.3 809.8 500.2 C812.3 499.1 815.9 493.9 816.3 494.8 C816.7 495.6 813.9 503.0 811.9 505.1 C809.9 507.2 806.8 507.4 804.3 507.3 C801.8 507.2 798.7 506.3 796.7 504.6 C794.7 502.8 791.6 497.5 792.3 496.9Z" fill="#8000ff" />
<path d="M1027.4 548.9 C1028.8 546.0 1032.8 542.9 1036.1 541.6 C1039.5 540.3 1044.1 540.5 1047.8 540.9 C1051.4 541.3 1055.5 542.0 1057.9 543.8 C1060.3 545.6 1061.8 549.0 1062.3 551.8 C1062.8 554.6 1062.3 557.6 1060.8 560.5 C1059.4 563.4 1056.7 566.9 1053.6 569.2 C1050.4 571.5 1045.6 574.3 1041.9 574.3 C1038.3 574.3 1034.1 571.8 1031.8 569.2 C1029.5 566.7 1028.9 562.4 1028.2 559.0 C1027.4 555.7 1026.1 551.8 1027.4 548.9Z" fill="#8a18ff" />
<path d="M1031.8 551.8 C1032.8 549.7 1035.7 547.2 1039.0 546.7 C1042.4 546.2 1049.2 547.3 1052.1 548.9 C1055.0 550.5 1056.7 553.5 1056.5 556.1 C1056.2 558.8 1053.6 563.2 1050.7 564.9 C1047.8 566.5 1041.9 567.3 1039.0 566.3 C1036.1 565.3 1034.4 561.5 1033.2 559.0 C1032.0 556.6 1030.8 553.8 1031.8 551.8Z" fill="#e648f0" />
<path d="M1035.4 554.7 C1036.4 553.2 1039.4 550.6 1041.9 550.3 C1044.5 550.1 1049.2 551.5 1050.7 553.2 C1052.1 554.9 1051.9 558.9 1050.7 560.5 C1049.5 562.1 1045.8 562.9 1043.4 562.7 C1041.0 562.4 1037.5 560.4 1036.1 559.0 C1034.8 557.7 1034.4 556.1 1035.4 554.7Z" fill="#f03068" />
<path d="M1036.1 557.6 C1036.0 556.7 1039.0 555.9 1040.5 556.1 C1041.9 556.4 1044.7 558.2 1044.9 559.0 C1045.0 559.9 1042.7 561.5 1041.2 561.2 C1039.8 561.0 1036.3 558.4 1036.1 557.6Z" fill="#f06040" />
<path d="M1031.8 630.2 C1032.2 631.1 1041.5 636.4 1043.4 637.5 C1045.3 638.5 1049.1 640.2 1050.7 640.4 C1052.3 640.5 1057.3 639.2 1059.4 638.9 C1061.4 638.6 1068.7 637.9 1071.0 637.5 C1073.3 637.0 1080.6 635.4 1082.6 634.6 C1084.6 633.7 1089.9 629.9 1091.3 628.8 C1092.8 627.6 1096.4 624.1 1097.1 622.9 C1097.9 621.8 1101.5 616.7 1098.6 617.1 C1095.7 617.6 1074.0 626.1 1068.1 627.3 C1062.1 628.5 1042.7 628.5 1039.0 628.8 C1035.4 629.0 1031.3 629.3 1031.8 630.2Z" fill="#e8a8e8" />
<path d="M1059.4 637.5 C1059.6 636.4 1064.9 633.3 1068.1 631.7 C1071.2 630.0 1075.8 627.3 1078.3 627.3 C1080.7 627.3 1083.1 630.2 1082.6 631.7 C1082.1 633.1 1078.0 634.9 1075.3 636.0 C1072.7 637.1 1069.3 637.9 1066.6 638.2 C1064.0 638.4 1059.1 638.6 1059.4 637.5Z" fill="#f08068" />
<path d="M1111.7 561.2 C1112.9 559.0 1117.9 558.2 1120.4 559.0 C1122.8 559.9 1124.5 561.9 1126.2 566.3 C1127.9 570.7 1129.8 580.6 1130.5 585.2 C1131.3 589.8 1133.2 589.1 1130.5 593.9 C1127.9 598.7 1118.2 610.6 1114.6 614.2 C1110.9 617.9 1108.3 617.1 1108.8 615.7 C1109.2 614.2 1114.8 609.6 1117.5 605.5 C1120.1 601.4 1124.5 595.1 1124.7 591.0 C1125.0 586.9 1120.9 584.0 1118.9 580.8 C1117.0 577.7 1114.3 575.4 1113.1 572.1 C1111.9 568.8 1110.4 563.4 1111.7 561.2Z" fill="#e878e8" />
<path d="M1111.7 559.8 C1112.9 557.7 1117.9 557.2 1120.4 558.3 C1122.8 559.4 1124.8 563.0 1126.2 566.3 C1127.5 569.6 1129.3 576.0 1128.4 577.9 C1127.4 579.9 1122.9 579.1 1120.4 577.9 C1117.8 576.7 1114.6 573.7 1113.1 570.7 C1111.7 567.6 1110.4 561.8 1111.7 559.8Z" fill="#d8a0e8" />
<path d="M1028.2 630.2 C1028.8 629.0 1030.8 625.5 1033.2 622.9 C1035.7 620.4 1043.0 614.6 1046.3 611.3 C1049.6 608.0 1055.0 602.3 1057.9 598.3 C1060.8 594.2 1065.8 584.9 1068.1 580.8 C1070.4 576.8 1073.0 570.9 1075.3 567.8 C1077.7 564.7 1082.2 560.0 1085.5 557.6 C1088.8 555.2 1096.0 550.8 1100.0 549.6 C1104.1 548.4 1113.2 548.0 1116.0 548.9 C1118.8 549.8 1120.9 554.8 1121.1 556.1 C1121.3 557.5 1118.7 558.4 1117.5 559.0 C1116.2 559.7 1112.2 559.5 1111.7 561.2 C1111.1 563.0 1112.1 569.5 1113.1 572.1 C1114.1 574.7 1117.2 578.7 1118.9 580.8 C1120.7 583.0 1125.4 586.3 1126.2 588.1 C1127.0 589.8 1125.9 591.6 1124.7 593.9 C1123.6 596.2 1119.6 602.6 1117.5 605.5 C1115.3 608.4 1111.5 614.1 1108.8 615.7 C1106.0 617.2 1100.6 616.4 1097.1 617.1 C1093.6 617.9 1086.5 619.9 1082.6 621.5 C1078.7 623.0 1072.0 627.4 1068.1 628.8 C1064.2 630.1 1057.4 631.5 1053.6 631.7 C1049.7 631.8 1042.4 630.2 1039.0 630.2 C1035.7 630.2 1029.6 631.7 1028.2 631.7 C1026.7 631.7 1027.5 631.4 1028.2 630.2Z" fill="url(#pv2)" />
<path d="M919.1 682.9 C919.1 680.4 920.4 678.2 922.2 676.8 C924.0 675.3 927.3 674.3 929.9 674.3 C932.4 674.3 935.9 675.3 937.6 676.8 C939.2 678.2 940.0 680.6 939.7 682.9 C939.5 685.2 937.9 688.6 936.0 690.6 C934.1 692.7 930.6 695.0 928.3 695.2 C926.0 695.5 923.7 694.2 922.2 692.1 C920.7 690.1 919.1 685.5 919.1 682.9Z" fill="#8000ff" /></g>
<g id="frontedges" fill="none" stroke="#000" stroke-width="1" shape-rendering="crispEdges"><path d="M340.3 383.8 L726.2 77.4"/><path d="M726.2 77.4 L1364 297.5"/><path d="M1364 297.5 L1045.4 691.2"/><path d="M1045.4 691.2 L340.3 383.8"/><path d="M340.3 383.8 L356.8 471.3"/><path d="M1364 297.5 L1352.2 385.3"/><path d="M1045.4 691.2 L1042.1 781.7"/><path d="M356.8 471.3 L1042.1 781.7"/><path d="M1042.1 781.7 L1352.2 385.3"/></g>
<g fill="none" stroke="#000" stroke-width="1" shape-rendering="crispEdges"><path d="M356.8 471.3 L387.7 493.5"/><path d="M457.5 517.6 L458.5 525.6"/><path d="M559.4 564 L560.4 572.5"/><path d="M666.6 612.9 L667.6 621.5"/><path d="M778 663 L779 672"/><path d="M893.6 716.7 L894.6 726"/><path d="M1042.1 781.7 L1003.6 774.4"/><path d="M1042.1 781.7 L1070 755"/><path d="M1364 297.5 L1372.9 314.4"/><path d="M1359 338 L1368.6 340.3"/><path d="M1352.2 385.3 L1364.7 372.5"/><path d="M1293 469 L1295.5 460"/><path d="M1237 540 L1239.5 531"/><path d="M1176 617 L1178.5 608"/><path d="M1352.2 385.3 L1337 411"/></g>
<text transform="matrix(0.912 0.41 0.1 1 367 495)" font-size="12.39" letter-spacing="1.83" font-family="Liberation Sans, sans-serif" fill="#000" stroke="#000" stroke-width="0.25">115098</text>
<text transform="matrix(0.912 0.41 0.1 1 438 527.3)" font-size="12.14" letter-spacing="1.79" font-family="Liberation Sans, sans-serif" fill="#000" stroke="#000" stroke-width="0.25">115200</text>
<text transform="matrix(0.912 0.41 0.1 1 538.5 573)" font-size="12.65" letter-spacing="1.87" font-family="Liberation Sans, sans-serif" fill="#000" stroke="#000" stroke-width="0.25">115300</text>
<text transform="matrix(0.912 0.41 0.1 1 644 621.3)" font-size="13.29" letter-spacing="1.96" font-family="Liberation Sans, sans-serif" fill="#000" stroke="#000" stroke-width="0.25">115400</text>
<text transform="matrix(0.912 0.41 0.1 1 753 670.5)" font-size="13.93" letter-spacing="2.06" font-family="Liberation Sans, sans-serif" fill="#000" stroke="#000" stroke-width="0.25">115500</text>
<text transform="matrix(0.912 0.41 0.1 1 868 723.5)" font-size="14.69" letter-spacing="2.17" font-family="Liberation Sans, sans-serif" fill="#000" stroke="#000" stroke-width="0.25">115600</text>
<text transform="matrix(0.912 0.41 0.1 1 975.5 772.5)" font-size="15.08" letter-spacing="2.23" font-family="Liberation Sans, sans-serif" fill="#000" stroke="#000" stroke-width="0.25">115722</text>
<text transform="matrix(0.912 0.41 0.1 1 675 653)" font-size="12.5" font-family="Liberation Sans, sans-serif">Y</text>
<text transform="translate(1382 317.5) rotate(-78)" font-size="14" font-style="italic" text-anchor="middle" dominant-baseline="central" font-family="Liberation Sans, sans-serif">60</text>
<text transform="translate(1377.5 343.5) rotate(-78)" font-size="14" font-style="italic" text-anchor="middle" dominant-baseline="central" font-family="Liberation Sans, sans-serif">20</text>
<text transform="translate(1374.5 374) rotate(-78)" font-size="14" font-style="italic" text-anchor="middle" dominant-baseline="central" font-family="Liberation Sans, sans-serif">-30</text>
<text transform="translate(1398 355.5) rotate(-78)" font-size="14" font-style="italic" text-anchor="middle" dominant-baseline="central" font-family="Liberation Sans, sans-serif">Z</text>
<text transform="translate(1331 429) matrix(0.695 -0.891 0.32 0.42 0 0)" font-size="9" letter-spacing="0.6" font-style="italic" font-weight="bold" text-anchor="middle" font-family="Liberation Sans, sans-serif">341689.7</text>
<text transform="translate(1294 478) matrix(0.801 -1.026 0.32 0.42 0 0)" font-size="9" letter-spacing="0.6" font-style="italic" font-weight="bold" text-anchor="middle" font-family="Liberation Sans, sans-serif">341800</text>
<text transform="translate(1238.5 549) matrix(0.857 -1.098 0.32 0.42 0 0)" font-size="9" letter-spacing="0.6" font-style="italic" font-weight="bold" text-anchor="middle" font-family="Liberation Sans, sans-serif">341900</text>
<text transform="translate(1179 625) matrix(0.894 -1.145 0.32 0.42 0 0)" font-size="9" letter-spacing="0.6" font-style="italic" font-weight="bold" text-anchor="middle" font-family="Liberation Sans, sans-serif">342000</text>
<text transform="translate(1071.5 764) matrix(0.945 -1.211 0.32 0.42 0 0)" font-size="9" letter-spacing="0.6" font-style="italic" font-weight="bold" text-anchor="middle" font-family="Liberation Sans, sans-serif">342202.3</text>
<text transform="translate(1208.5 600.5) matrix(0.983 -1.260 0.32 0.42 0 0)" font-size="9" letter-spacing="0.6" font-style="italic" font-weight="bold" text-anchor="middle" font-family="Liberation Sans, sans-serif">X</text>
<g><path d="M283.7 751 L258 778" stroke="#a01010" stroke-width="2"/><path d="M263.5 765 L269.5 772 L254 781.5Z" fill="#8a0c0c"/><path d="M263.5 765 L266.5 768.5 L254 781.5Z" fill="#b81818"/><path d="M283.7 751 L320 765" stroke="#0a8a0a" stroke-width="2"/><path d="M318.5 758.5 L315 768.5 L334 770Z" fill="#0a6e0a"/><path d="M318.5 758.5 L316.7 763.5 L334 770Z" fill="#109a10"/><path d="M283.7 751 V720" stroke="#0000b0" stroke-width="2"/><path d="M278.7 722 L283.7 705.5 L288.7 722 C286 723.6 281.4 723.6 278.7 722Z" fill="#00009a"/><text x="284.5" y="705" font-size="15" font-style="italic" fill="#1414ff" font-family="Liberation Serif, serif">Z</text><text x="340.5" y="777.5" font-size="15" font-style="italic" fill="#14e014" font-family="Liberation Serif, serif">Y</text><text x="249" y="791.5" font-size="15" font-style="italic" fill="#ff1414" font-family="Liberation Serif, serif">X</text></g>
</svg><!--VIEW-END-->
<div id="icons"><svg class="a" style="left:218px;top:27px" width="9" height="11"><path d="M2.5 .5 H6.5 V6 H2.5Z M6 .5 V6 M.5 6.5 H8.5 M4.5 6.5 V10.5" fill="none" stroke="#fff" stroke-width="1"/></svg>
<svg class="a" style="left:3px;top:46px" width="3" height="15"><g fill="#b5b5b5"><rect y="0" width="2" height="2"/><rect y="4" width="2" height="2"/><rect y="8" width="2" height="2"/><rect y="12" width="2" height="2"/></g></svg>
<svg class="a" style="left:11px;top:45px" width="18" height="18" viewBox="0 0 18 18"><defs><linearGradient id="pa" x1="0" y1="0" x2="1" y2="1"><stop offset="0" stop-color="#8fd0f5"/><stop offset="1" stop-color="#2f78c0"/></linearGradient></defs>
<path d="M9.5 1.5 L17 9 L9.5 16.5 L2 9Z" fill="url(#pa)" stroke="#2a5a8a" stroke-width=".6"/><path d="M4 11 C7 8 10 12.5 14.5 9.5 L16.5 9.5 L9.5 16.3Z" fill="#9bc13a"/><path d="M6 11.5 C8 10 11 13 14 10.5 L9.5 15.5Z" fill="#c7dd62" opacity=".7"/>
<path d="M4 1 H7 V3.5 H9.5 V6.5 H7 V9 H4 V6.5 H1.5 V3.5 H4Z" fill="#ffc627" stroke="#e69a12" stroke-width=".8"/></svg>
<div class="a" style="left:32px;top:43px;width:23px;height:22px;border:1px solid #3a96f5;background:#f3f8fd"></div>
<svg class="a" style="left:35px;top:45px" width="17" height="18" viewBox="0 0 17 18"><path d="M8.5 8 L16.5 12.5 L8.5 17 L.5 12.5Z" fill="#c9c9c9"/><path d="M8.5 6.5 L16 11 L8.5 15.5 L1 11Z" fill="#38d15a"/><path d="M8.5 6.5 L12 8.6 L8 10.5 L5 8.6Z" fill="#f05030"/><path d="M8.5 6.5 L16 11 L12 13 L9 10Z" fill="#7be04a"/><path d="M5 11 L9 9.8 L12 12.5 L8.5 15.5Z" fill="#22d6e8"/><path d="M11.5 7.5 L13.5 9 L11 10 Z" fill="#ff9a30"/>
<path d="M7 1 H10 V6 H13 L8.5 10.5 L4 6 H7Z" fill="#000"/></svg>
<svg class="a" style="left:239px;top:26px" width="18" height="18" viewBox="0 0 18 18"><ellipse cx="9" cy="7.3" rx="7.6" ry="5" fill="none" stroke="#111" stroke-width="1.1"/><path d="M3.2 4 L4.6 1.8 L5.8 3.6" fill="none" stroke="#111" stroke-width=".9"/><path d="M8.5 7.5 L8.5 15 L10.3 13.2 L11.8 16.4 L13.2 15.7 L11.8 12.6 L14.2 12.4Z" fill="#fff" stroke="#111" stroke-width=".9"/></svg>
<svg class="a" style="left:263px;top:26px" width="18" height="18" viewBox="0 0 18 18"><defs><radialGradient id="mg" cx=".4" cy=".35" r=".7"><stop offset="0" stop-color="#fff"/><stop offset=".7" stop-color="#b8d4ec"/><stop offset="1" stop-color="#7fa6cc"/></radialGradient></defs><path d="M7.5 9.5 L2 15.3" stroke="#7a5a10" stroke-width="3" stroke-linecap="round"/><path d="M7.5 9.5 L2 15.3" stroke="#f2c24a" stroke-width="1.6" stroke-linecap="round"/><circle cx="10.5" cy="6.5" r="5.3" fill="url(#mg)" stroke="#5f7f9f" stroke-width="1"/></svg>
<div class="a" style="left:283px;top:24px;width:23px;height:22px;border:1px solid #3a96f5;background:#f3f8fd"></div>
<svg class="a" style="left:286px;top:26px" width="18" height="18" viewBox="0 0 18 18"><path d="M6.5 15.8 L2.2 10.6 C1.2 9.4 2.4 8 3.6 9 L5 10.4 V4.2 C5 2.6 7.3 2.6 7.3 4.2 V3.2 C7.3 1.6 9.7 1.6 9.7 3.2 V3.8 C9.7 2.3 12.1 2.3 12.1 3.8 V5.4 C12.1 4 14.4 4 14.4 5.4 V10.5 C14.4 12.5 13.5 14 12.8 15.8" fill="#fff" stroke="#111" stroke-width="1" stroke-linejoin="round"/><path d="M7.3 4.2 V8.5 M9.7 3.5 V8.5 M12.1 5 V8.8" stroke="#111" stroke-width=".9" fill="none"/></svg>
<i class="a" style="left:309px;top:28px;width:1px;height:15px;background:#c4c4c4"></i>
<svg class="a" style="left:314px;top:27px" width="18" height="16" viewBox="0 0 18 16"><path d="M2.5 3 L9 5.5 L15 2.5 L15.5 10.5 L2.5 13.5Z" fill="#dcdcdc" stroke="#c6c6c6"/><g fill="#f4f4f4" stroke="#c2c2c2" stroke-width=".9"><circle cx="2.5" cy="3" r="1.7"/><circle cx="9" cy="5.5" r="1.7"/><circle cx="15" cy="2.5" r="1.7"/><circle cx="15.5" cy="10.5" r="1.7"/><circle cx="2.5" cy="13.5" r="1.7"/></g></svg>
<i class="a" style="left:338px;top:28px;width:1px;height:15px;background:#c4c4c4"></i>
<i class="a" style="left:344px;top:28px;width:1px;height:15px;background:#c4c4c4"></i>
<svg class="a" style="left:350px;top:27px" width="16" height="16" viewBox="0 0 16 16"><g fill="#58b548" stroke="#3c9a34" stroke-width=".5"><path d="M.8 2.2 L2.2 .8 L4.6 3.2 L6 1.8 L6.4 6.4 L1.8 6 L3.2 4.6Z"/><path d="M15.2 2.2 L13.8 .8 L11.4 3.2 L10 1.8 L9.6 6.4 L14.2 6 L12.8 4.6Z"/><path d="M.8 13.8 L2.2 15.2 L4.6 12.8 L6 14.2 L6.4 9.6 L1.8 10 L3.2 11.4Z"/><path d="M15.2 13.8 L13.8 15.2 L11.4 12.8 L10 14.2 L9.6 9.6 L14.2 10 L12.8 11.4Z"/></g></svg>
<i class="a" style="left:373px;top:28px;width:1px;height:15px;background:#c4c4c4"></i>
<svg class="a" style="left:379px;top:27px" width="17" height="16" viewBox="0 0 17 16"><path d="M10 1 V9 M6 5 H14" stroke="#000" stroke-width="2"/><path d="M7.5 2.5 L12.5 7.5 M12.5 2.5 L7.5 7.5" stroke="#000" stroke-width=".8"/><path d="M4 8.5 V14.5 M1 11.5 H7" stroke="#000" stroke-width="1.1"/><path d="M2 9.5 L6 13.5 M6 9.5 L2 13.5" stroke="#000" stroke-width=".5"/></svg>
<i class="a" style="left:402px;top:28px;width:1px;height:15px;background:#c4c4c4"></i>
<div class="a" style="left:405px;top:24px;width:23px;height:22px;border:1px solid #3a96f5;background:#f3f8fd"></div>
<svg class="a" style="left:407px;top:26px" width="18" height="18" viewBox="0 0 18 18"><defs><linearGradient id="moa" x1="0" y1="0" x2="1" y2="1"><stop offset="0" stop-color="#d8f0ff"/><stop offset="1" stop-color="#3aa0e8"/></linearGradient></defs>
<rect x="5" y="5.5" width="11.5" height="9" fill="url(#moa)" stroke="#bcd" stroke-width=".5"/><path d="M7 17 H14.5 M9.5 14.5 V17 M12 14.5 V17" stroke="#c8c8c8" stroke-width="1"/>
<path d="M1.2 5.2 C2.5 1.8 6.5 1 9.3 2 L9.3 .8 L13.6 3.8 L9.3 6.6 L9.3 5.2 C6.5 4.6 4.5 6 4.5 8.2Z" fill="#6fb033" stroke="#1e4a0c" stroke-width=".8" stroke-linejoin="round"/>
<path d="M13.2 7.2 C12.6 10.8 9 12.4 5.8 11.3 L5.8 12.6 L1.4 9.6 L5.8 6.7 L5.8 8.2 C8.2 8.8 10.2 7.4 10.2 5.2Z" fill="#4c9422" stroke="#1e4a0c" stroke-width=".8" stroke-linejoin="round"/><rect x="10.8" y="10.6" width="6.3" height="6.3" fill="#fff" stroke="#b5232f" stroke-width="1"/><path d="M12.2 13.4 L13.7 15.3 L15.8 11.9" fill="none" stroke="#000" stroke-width="1.2"/></svg>
<svg class="a" style="left:430px;top:26px" width="18" height="18" viewBox="0 0 18 18"><defs><linearGradient id="mob" x1="0" y1="0" x2="1" y2="1"><stop offset="0" stop-color="#d8f0ff"/><stop offset="1" stop-color="#3aa0e8"/></linearGradient></defs>
<rect x="5" y="5.5" width="11.5" height="9" fill="url(#mob)" stroke="#bcd" stroke-width=".5"/><path d="M7 17 H14.5 M9.5 14.5 V17 M12 14.5 V17" stroke="#c8c8c8" stroke-width="1"/>
<path d="M1.2 5.2 C2.5 1.8 6.5 1 9.3 2 L9.3 .8 L13.6 3.8 L9.3 6.6 L9.3 5.2 C6.5 4.6 4.5 6 4.5 8.2Z" fill="#6fb033" stroke="#1e4a0c" stroke-width=".8" stroke-linejoin="round"/>
<path d="M13.2 7.2 C12.6 10.8 9 12.4 5.8 11.3 L5.8 12.6 L1.4 9.6 L5.8 6.7 L5.8 8.2 C8.2 8.8 10.2 7.4 10.2 5.2Z" fill="#4c9422" stroke="#1e4a0c" stroke-width=".8" stroke-linejoin="round"/></svg>
<i class="a" style="left:454px;top:28px;width:1px;height:15px;background:#c4c4c4"></i>
<div class="a" style="left:457px;top:24px;width:23px;height:22px;border:1px solid #3a96f5;background:#f3f8fd"></div>
<svg class="a" style="left:459px;top:26px" width="18" height="18" viewBox="0 0 18 18"><defs><radialGradient id="gla" cx=".42" cy=".55" r=".62"><stop offset="0" stop-color="#8fe0ff"/><stop offset=".55" stop-color="#2f9be0"/><stop offset="1" stop-color="#1a5fb0"/></radialGradient><clipPath id="gca"><circle cx="9" cy="9" r="7.8"/></clipPath></defs>
<circle cx="9" cy="9" r="7.8" fill="url(#gla)" stroke="#2a5aa0" stroke-width=".5"/><g clip-path="url(#gca)" fill="#4c9a2a"><path d="M2 5 C4 1.5 8 .5 11 2 C11.5 4 9.5 5.5 7 5.5 C5 5.5 4 7 2.5 7.5Z"/><path d="M17 8.5 C14.5 8.5 12.5 10.5 12.8 12.8 C13 14.5 14.5 15.5 16 14.5Z"/></g><rect x="10.8" y="10.6" width="6.3" height="6.3" fill="#fff" stroke="#b5232f" stroke-width="1"/><path d="M12.2 13.4 L13.7 15.3 L15.8 11.9" fill="none" stroke="#000" stroke-width="1.2"/></svg>
<svg class="a" style="left:482px;top:26px" width="18" height="18" viewBox="0 0 18 18"><defs><radialGradient id="glb" cx=".42" cy=".55" r=".62"><stop offset="0" stop-color="#8fe0ff"/><stop offset=".55" stop-color="#2f9be0"/><stop offset="1" stop-color="#1a5fb0"/></radialGradient><clipPath id="gcb"><circle cx="9" cy="9" r="7.8"/></clipPath></defs>
<circle cx="9" cy="9" r="7.8" fill="url(#glb)" stroke="#2a5aa0" stroke-width=".5"/><g clip-path="url(#gcb)" fill="#4c9a2a"><path d="M2 5 C4 1.5 8 .5 11 2 C11.5 4 9.5 5.5 7 5.5 C5 5.5 4 7 2.5 7.5Z"/><path d="M17 8.5 C14.5 8.5 12.5 10.5 12.8 12.8 C13 14.5 14.5 15.5 16 14.5Z"/></g></svg>
<i class="a" style="left:506px;top:28px;width:1px;height:15px;background:#c4c4c4"></i>
<svg class="a" style="left:512px;top:27px" width="16" height="16" viewBox="0 0 16 16"><defs><linearGradient id="og0" x1="0" y1="0" x2="1" y2="1"><stop offset="0" stop-color="#ffc41a"/><stop offset="1" stop-color="#ff8a00"/></linearGradient><linearGradient id="cf0" x1="0" y1="0" x2="1" y2="1"><stop offset="0" stop-color="#fff"/><stop offset="1" stop-color="#c9d6f0"/></linearGradient></defs><path d="M.5 4 L5 .5 H15.5 V10.5 L12 15.5 H.5Z" fill="url(#cf0)"/><path d="M5 .5 H15.5 V10.5 H5Z" fill="url(#og0)"/><path d="M5 .5 V10.5 H15.5 M5 10.5 L.5 15.5" fill="none" stroke="#8aa4d6" stroke-width=".9"/><path d="M.5 4 H12 V15.5 H.5Z M.5 4 L5 .5 H15.5 L12 4 M15.5 .5 V10.5 L12 15.5" fill="none" stroke="#6a8fd0" stroke-width="1.1" stroke-linejoin="round"/></svg>
<svg class="a" style="left:535px;top:27px" width="16" height="16" viewBox="0 0 16 16"><defs><linearGradient id="og1" x1="0" y1="0" x2="1" y2="1"><stop offset="0" stop-color="#ffc41a"/><stop offset="1" stop-color="#ff8a00"/></linearGradient><linearGradient id="cf1" x1="0" y1="0" x2="1" y2="1"><stop offset="0" stop-color="#fff"/><stop offset="1" stop-color="#c9d6f0"/></linearGradient></defs><path d="M.5 4 L5 .5 H15.5 V10.5 L12 15.5 H.5Z" fill="url(#cf1)"/><path d="M5 .5 V10.5 H15.5 M5 10.5 L.5 15.5" fill="none" stroke="#8aa4d6" stroke-width=".9"/><path d="M.5 4 H12 V15.5 H.5Z" fill="url(#og1)"/><path d="M.5 4 H12 V15.5 H.5Z M.5 4 L5 .5 H15.5 L12 4 M15.5 .5 V10.5 L12 15.5" fill="none" stroke="#6a8fd0" stroke-width="1.1" stroke-linejoin="round"/></svg>
<svg class="a" style="left:558px;top:27px" width="16" height="16" viewBox="0 0 16 16"><defs><linearGradient id="og2" x1="0" y1="0" x2="1" y2="1"><stop offset="0" stop-color="#ffc41a"/><stop offset="1" stop-color="#ff8a00"/></linearGradient><linearGradient id="cf2" x1="0" y1="0" x2="1" y2="1"><stop offset="0" stop-color="#fff"/><stop offset="1" stop-color="#c9d6f0"/></linearGradient></defs><path d="M.5 4 L5 .5 H15.5 V10.5 L12 15.5 H.5Z" fill="url(#cf2)"/><path d="M5 .5 V10.5 H15.5 M5 10.5 L.5 15.5" fill="none" stroke="#8aa4d6" stroke-width=".9"/><path d="M12 4 L15.5 .5 V10.5 L12 15.5Z" fill="url(#og2)"/><path d="M.5 4 H12 V15.5 H.5Z M.5 4 L5 .5 H15.5 L12 4 M15.5 .5 V10.5 L12 15.5" fill="none" stroke="#6a8fd0" stroke-width="1.1" stroke-linejoin="round"/></svg>
<svg class="a" style="left:581px;top:27px" width="16" height="16" viewBox="0 0 16 16"><defs><linearGradient id="og3" x1="0" y1="0" x2="1" y2="1"><stop offset="0" stop-color="#ffc41a"/><stop offset="1" stop-color="#ff8a00"/></linearGradient><linearGradient id="cf3" x1="0" y1="0" x2="1" y2="1"><stop offset="0" stop-color="#fff"/><stop offset="1" stop-color="#c9d6f0"/></linearGradient></defs><path d="M.5 4 L5 .5 H15.5 V10.5 L12 15.5 H.5Z" fill="url(#cf3)"/><path d="M.5 4 L5 .5 V10.5 L.5 15.5Z" fill="url(#og3)"/><path d="M5 .5 V10.5 H15.5 M5 10.5 L.5 15.5" fill="none" stroke="#8aa4d6" stroke-width=".9"/><path d="M.5 4 H12 V15.5 H.5Z M.5 4 L5 .5 H15.5 L12 4 M15.5 .5 V10.5 L12 15.5" fill="none" stroke="#6a8fd0" stroke-width="1.1" stroke-linejoin="round"/></svg>
<svg class="a" style="left:604px;top:27px" width="16" height="16" viewBox="0 0 16 16"><defs><linearGradient id="og4" x1="0" y1="0" x2="1" y2="1"><stop offset="0" stop-color="#ffc41a"/><stop offset="1" stop-color="#ff8a00"/></linearGradient><linearGradient id="cf4" x1="0" y1="0" x2="1" y2="1"><stop offset="0" stop-color="#fff"/><stop offset="1" stop-color="#c9d6f0"/></linearGradient></defs><path d="M.5 4 L5 .5 H15.5 V10.5 L12 15.5 H.5Z" fill="url(#cf4)"/><path d="M5 .5 V10.5 H15.5 M5 10.5 L.5 15.5" fill="none" stroke="#8aa4d6" stroke-width=".9"/><path d="M.5 4 L5 .5 H15.5 L12 4Z" fill="url(#og4)"/><path d="M.5 4 H12 V15.5 H.5Z M.5 4 L5 .5 H15.5 L12 4 M15.5 .5 V10.5 L12 15.5" fill="none" stroke="#6a8fd0" stroke-width="1.1" stroke-linejoin="round"/></svg>
<svg class="a" style="left:627px;top:27px" width="16" height="16" viewBox="0 0 16 16"><defs><linearGradient id="og5" x1="0" y1="0" x2="1" y2="1"><stop offset="0" stop-color="#ffc41a"/><stop offset="1" stop-color="#ff8a00"/></linearGradient><linearGradient id="cf5" x1="0" y1="0" x2="1" y2="1"><stop offset="0" stop-color="#fff"/><stop offset="1" stop-color="#c9d6f0"/></linearGradient></defs><path d="M.5 4 L5 .5 H15.5 V10.5 L12 15.5 H.5Z" fill="url(#cf5)"/><path d="M.5 15.5 L5 10.5 H15.5 L12 15.5Z" fill="url(#og5)"/><path d="M5 .5 V10.5 H15.5 M5 10.5 L.5 15.5" fill="none" stroke="#8aa4d6" stroke-width=".9"/><path d="M.5 4 H12 V15.5 H.5Z M.5 4 L5 .5 H15.5 L12 4 M15.5 .5 V10.5 L12 15.5" fill="none" stroke="#6a8fd0" stroke-width="1.1" stroke-linejoin="round"/></svg>
<svg class="a" style="left:650px;top:27px" width="16" height="16" viewBox="0 0 16 16"><defs><linearGradient id="og6" x1="0" y1="0" x2="1" y2="1"><stop offset="0" stop-color="#ffc41a"/><stop offset="1" stop-color="#ff8a00"/></linearGradient><linearGradient id="cf6" x1="0" y1="0" x2="1" y2="1"><stop offset="0" stop-color="#fff"/><stop offset="1" stop-color="#c9d6f0"/></linearGradient></defs><path d="M.5 4 L5 .5 H15.5 V10.5 L12 15.5 H.5Z" fill="url(#cf6)"/><path d="M.5 4 H12 V15.5 H.5Z M.5 4 L5 .5 H15.5 L12 4 M15.5 .5 V10.5 L12 15.5" fill="none" stroke="#6a8fd0" stroke-width="1.1" stroke-linejoin="round"/><path d="M3 7 V13 H9 M3 13 L7.5 8.5" stroke="#000" stroke-width="1.2" fill="none"/><circle cx="7.8" cy="8" r="1.3" fill="#fff" stroke="#000" stroke-width=".9"/></svg>
<i class="a" style="left:673px;top:28px;width:1px;height:15px;background:#c4c4c4"></i>
<svg class="a" style="left:679px;top:27px" width="16" height="16" viewBox="0 0 16 16"><path d="M1 5 L9 .8 H15 V7 L10.5 15 H1Z" fill="#e3eaf8"/><path d="M1 5 H10.5 V15 H1Z M1 5 L9 .8 H15 L10.5 5 M15 .8 V7 L10.5 15 M9 .8 V7 H15 M9 7 L1 15" fill="none" stroke="#8aa4d6" stroke-width=".9"/><g fill="#111"><circle cx="1" cy="5" r=".9"/><circle cx="10.5" cy="5" r=".9"/><circle cx="10.5" cy="15" r=".9"/><circle cx="1" cy="15" r=".9"/><circle cx="9" cy=".8" r=".9"/><circle cx="15" cy=".8" r=".9"/><circle cx="15" cy="7" r=".9"/><circle cx="9" cy="7" r=".9"/></g></svg></div>
<div id="status" class="a">
<span class="st" style="left:4px;letter-spacing:-0.083px">Hint: The End or Escape key will stop the 3D view from spinning.</span>
<span class="st" style="left:1086px;letter-spacing:-0.38px">WGS 84 / UTM zone 49N</span>
<span class="st" style="left:1226px;letter-spacing:-0.12px">Cursor: (*,*,*)</span>
<span class="st" style="left:1309px;letter-spacing:-0.395px">Incl.: 40° Az.: 238.3° LookAt: (341911.7,115450.6,-46.34734)</span>
<i class="a" style="left:1081px;top:3px;width:1px;height:19px;background:#b4b4b4"></i><i class="a" style="left:1221px;top:3px;width:1px;height:19px;background:#b4b4b4"></i><i class="a" style="left:1303px;top:3px;width:1px;height:19px;background:#b4b4b4"></i>
<svg class="a" style="left:1612px;top:11px" width="12" height="12"><g fill="#a8a8a8"><rect x="8" y="0" width="2" height="2"/><rect x="4" y="4" width="2" height="2"/><rect x="8" y="4" width="2" height="2"/><rect x="0" y="8" width="2" height="2"/><rect x="4" y="8" width="2" height="2"/><rect x="8" y="8" width="2" height="2"/></g></svg></div>
<div id="botline" class="a"></div>
<div id="redge" class="a"></div>
</body></html>
